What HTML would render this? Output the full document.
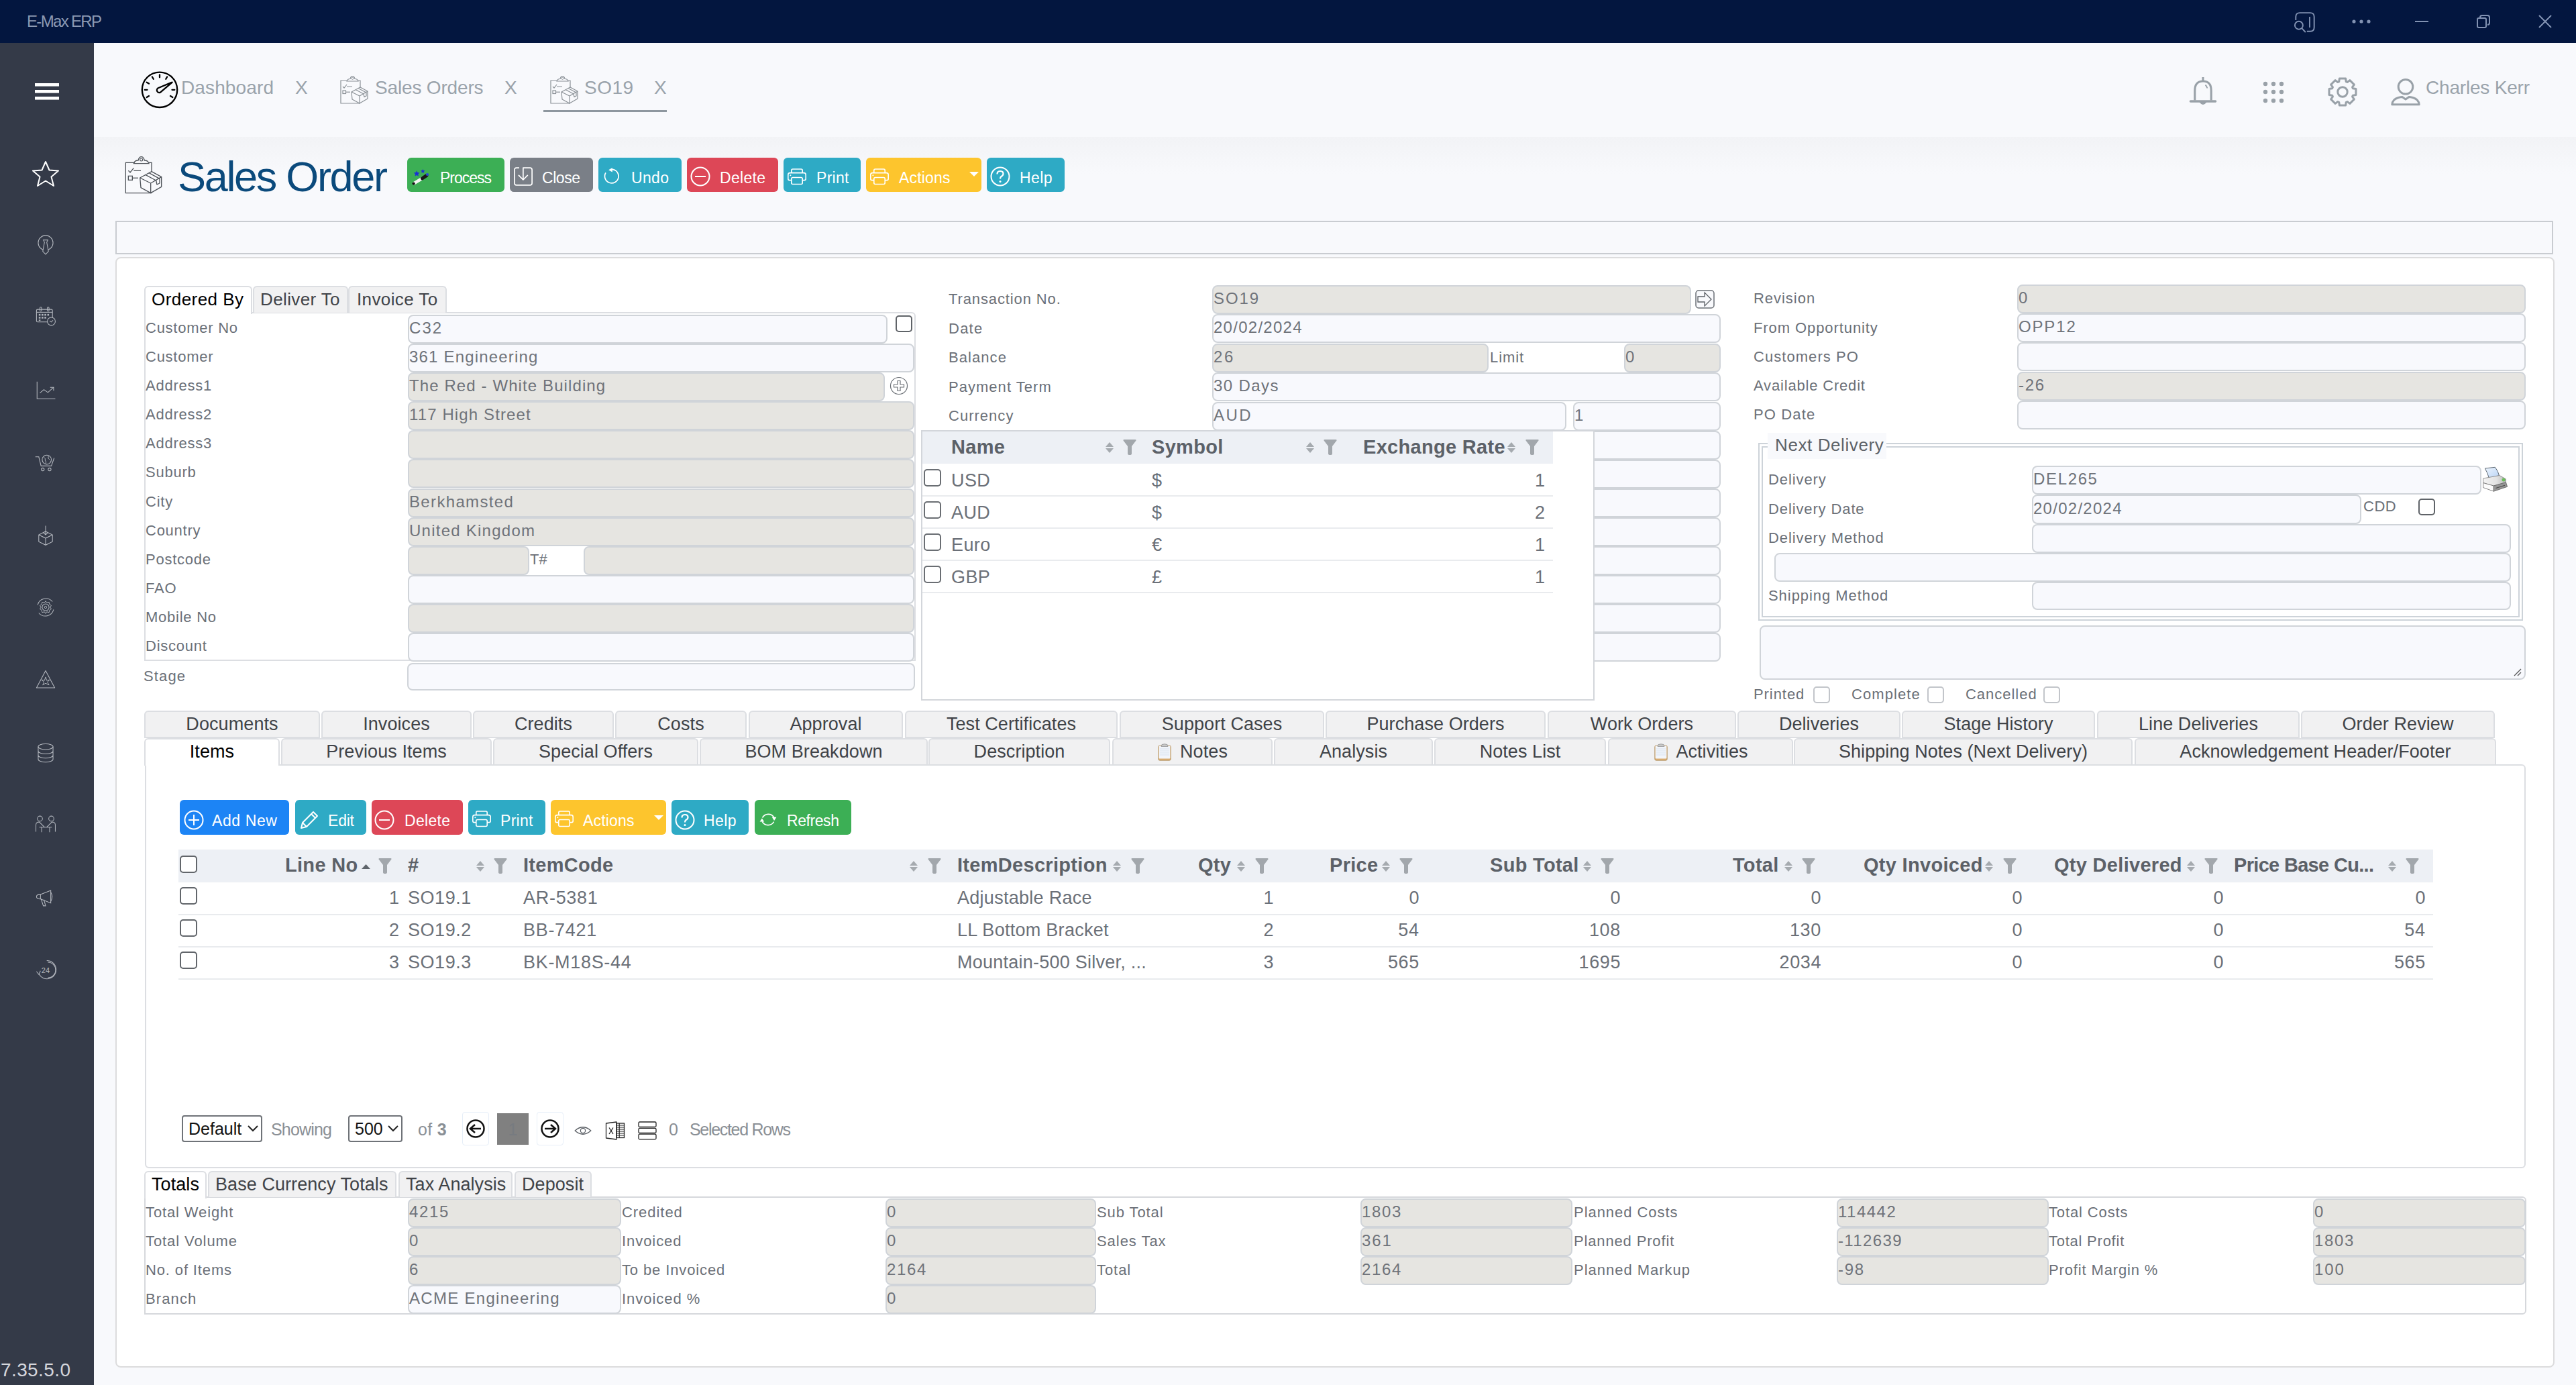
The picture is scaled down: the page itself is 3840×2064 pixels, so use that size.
<!DOCTYPE html><html><head><meta charset="utf-8"><style>
html,body{margin:0;padding:0}
body{width:3840px;height:2064px;overflow:hidden;position:relative;background:#f8f9fc;font-family:"Liberation Sans", sans-serif}
.in{position:absolute;box-sizing:border-box;border:2px solid #d0d4d9;border-radius:8px}
.tab{position:absolute;box-sizing:border-box;border:2px solid #dcdee2;border-bottom:none;border-radius:6px 6px 0 0;background:#f1f1f2;color:#3a3d42;font-size:27px;text-align:center;white-space:nowrap}
.btn{position:absolute;box-sizing:border-box;border-radius:6px;color:#fff;font-size:23px;white-space:nowrap}
svg{position:absolute;overflow:visible}
</style></head><body>
<div style="position:absolute;left:0px;top:0px;width:3840px;height:64px;background:#03163f"></div>
<div style="position:absolute;left:40px;top:18.2px;line-height:27.6px;font-size:24px;color:#8b99b3;font-weight:normal;letter-spacing:-1.674px;white-space:nowrap;">E-Max ERP</div>
<div style="position:absolute;left:0px;top:64px;width:140px;height:2000px;background:#343a48"></div>
<div style="position:absolute;left:1px;top:2025.9px;line-height:32.2px;font-size:28px;color:#d4d6dc;font-weight:normal;letter-spacing:0.395px;white-space:nowrap;">7.35.5.0</div>
<div style="position:absolute;left:140px;top:64px;width:3700px;height:140px;background:#f8f9fc"></div>
<div style="position:absolute;left:140px;top:204px;width:3700px;height:56px;background:linear-gradient(#f2f3f6,#f8f9fc)"></div>
<div style="position:absolute;left:172px;top:329px;width:3634px;height:50px;box-sizing:border-box;border:2px solid #c9ccd1;background:#f8f9fc"></div>
<div style="position:absolute;left:172px;top:383px;width:3636px;height:1655px;box-sizing:border-box;border:2px solid #dcdcdd;border-radius:8px;background:#ffffff"></div>
<svg style="left:3420px;top:17px" width="34" height="34" viewBox="0 0 34 34"><path d="M2.3 13 L2.3 8.1 Q2.3 2.1 8.3 2.1 L23.7 2.1 Q29.7 2.1 29.7 8.1 L29.7 23.7 Q29.7 29.7 23.7 29.7 L18.9 29.7" fill="none" stroke="#8292b2" stroke-width="1.9"/><line x1="23" y1="8" x2="23" y2="24" stroke="#8292b2" stroke-width="1.9"/><circle cx="6.9" cy="20.7" r="6" fill="none" stroke="#8292b2" stroke-width="1.9"/><line x1="11.3" y1="25.2" x2="16.8" y2="31" stroke="#8292b2" stroke-width="1.9"/></svg>
<svg style="left:3506px;top:29px" width="6" height="6"><circle cx="3" cy="3" r="2.6" fill="#8292b2"/></svg>
<svg style="left:3517px;top:29px" width="6" height="6"><circle cx="3" cy="3" r="2.6" fill="#8292b2"/></svg>
<svg style="left:3528px;top:29px" width="6" height="6"><circle cx="3" cy="3" r="2.6" fill="#8292b2"/></svg>
<svg style="left:3600px;top:31px" width="20" height="2"><rect width="20" height="2" fill="#8292b2"/></svg>
<svg style="left:3692px;top:22px" width="20" height="20" viewBox="0 0 20 20"><rect x="1" y="5" width="13" height="14" rx="2" fill="none" stroke="#8292b2" stroke-width="2"/><path d="M5 4 Q5 1 8 1 L16 1 Q19 1 19 4 L19 12 Q19 15 16 15" fill="none" stroke="#8292b2" stroke-width="2"/></svg>
<svg style="left:3784px;top:22px" width="20" height="20" viewBox="0 0 20 20"><path d="M1 1 L19 19 M19 1 L1 19" stroke="#8292b2" stroke-width="2"/></svg>
<svg style="left:52px;top:123.5px" width="36" height="26"><rect x="0" y="0" width="36" height="4.6" fill="#fff"/><rect x="0" y="10" width="36" height="4.6" fill="#fff"/><rect x="0" y="20" width="36" height="4.6" fill="#fff"/></svg>
<svg style="left:47px;top:239px" width="42" height="40" viewBox="0 0 42 40"><path d="M21 2 L26.5 14.5 L40 15.5 L29.5 24.5 L33 38 L21 30.5 L9 38 L12.5 24.5 L2 15.5 L15.5 14.5 Z" fill="none" stroke="#fff" stroke-width="2" stroke-linejoin="round"/></svg>
<svg style="left:51px;top:350px" width="34" height="34" viewBox="0 0 40 40"><circle cx="20" cy="14" r="13" fill="none" stroke="#b4b8bf" stroke-width="1.25"/><path d="M16 9 L24 9 L22 13 L25 29 L20 34 L15 29 L18 13 Z" fill="#343a48" stroke="#b4b8bf" stroke-width="1.25"/></svg>
<svg style="left:51px;top:456px" width="34" height="34" viewBox="0 0 40 40"><rect x="4" y="6" width="28" height="22" rx="2" fill="none" stroke="#b4b8bf" stroke-width="1.25"/><line x1="4" y1="11" x2="32" y2="11" stroke="#b4b8bf" stroke-width="1.2"/><rect x="10" y="2" width="3" height="7" rx="1.5" fill="none" stroke="#b4b8bf" stroke-width="1.2"/><rect x="23" y="2" width="3" height="7" rx="1.5" fill="none" stroke="#b4b8bf" stroke-width="1.2"/><g fill="#b4b8bf"><rect x="8" y="14" width="3" height="3"/><rect x="13" y="14" width="3" height="3"/><rect x="18" y="14" width="3" height="3"/><rect x="23" y="14" width="3" height="3"/><rect x="8" y="19" width="3" height="3"/><rect x="13" y="19" width="3" height="3"/><rect x="18" y="19" width="3" height="3"/><rect x="8" y="24" width="3" height="2"/></g><circle cx="30" cy="27" r="7" fill="#343a48" stroke="#b4b8bf" stroke-width="1.25"/><path d="M27 26 L30 28 L33 25" fill="none" stroke="#b4b8bf" stroke-width="1.2"/></svg>
<svg style="left:51px;top:567px" width="34" height="34" viewBox="0 0 40 40"><path d="M5 2 L5 32 L37 32" fill="none" stroke="#b4b8bf" stroke-width="1.25"/><path d="M10 22 L17 16 L24 21 L34 12" fill="none" stroke="#b4b8bf" stroke-width="1.25"/><path d="M28 12 L34 12 L34 18" fill="none" stroke="#b4b8bf" stroke-width="1.25"/></svg>
<svg style="left:51px;top:674px" width="34" height="34" viewBox="0 0 40 40"><path d="M2 8 L8 8 L12 24 L30 24 L35 10" fill="none" stroke="#b4b8bf" stroke-width="1.25"/><circle cx="15" cy="30" r="2.5" fill="none" stroke="#b4b8bf" stroke-width="1.2"/><circle cx="27" cy="30" r="2.5" fill="none" stroke="#b4b8bf" stroke-width="1.2"/><circle cx="22" cy="13" r="8" fill="#343a48" stroke="#b4b8bf" stroke-width="1.25"/><path d="M17 9 Q21 11 19 14 Q22 17 20 20 M25 7 Q23 11 27 13" fill="none" stroke="#b4b8bf" stroke-width="1.1"/></svg>
<svg style="left:51px;top:780px" width="34" height="34" viewBox="0 0 40 40"><path d="M20 14 L32 20 L32 32 L20 38 L8 32 L8 20 Z M8 20 L20 26 L32 20 M20 26 L20 38" fill="none" stroke="#b4b8bf" stroke-width="1.25"/><path d="M20 4 L20 20 M16 16 L20 20 L24 16" fill="none" stroke="#b4b8bf" stroke-width="1.25"/></svg>
<svg style="left:51px;top:888px" width="34" height="34" viewBox="0 0 40 40"><circle cx="20" cy="20" r="6" fill="none" stroke="#b4b8bf" stroke-width="1.2"/><circle cx="20" cy="20" r="2" fill="none" stroke="#b4b8bf" stroke-width="1"/><path d="M6 16 A15 15 0 0 1 32 10 M34 24 A15 15 0 0 1 8 30" fill="none" stroke="#b4b8bf" stroke-width="1.2"/><path d="M20 9 L22 12 L26 11 L27 15 L30 17 L28 20 L30 23 L27 25 L26 29 L22 28 L20 31 L18 28 L14 29 L13 25 L10 23 L12 20 L10 17 L13 15 L14 11 L18 12 Z" fill="none" stroke="#b4b8bf" stroke-width="1.1"/></svg>
<svg style="left:51px;top:997px" width="34" height="34" viewBox="0 0 40 40"><path d="M20 3 L36 33 L4 33 Z" fill="none" stroke="#b4b8bf" stroke-width="1.25" stroke-linejoin="round"/><path d="M20 14 L22 20 L27 19 L23 23 L26 28 L20 25 L15 28 L17 23 L13 19 L18 20 Z" fill="none" stroke="#b4b8bf" stroke-width="1.1"/></svg>
<svg style="left:51px;top:1106px" width="34" height="34" viewBox="0 0 40 40"><ellipse cx="20" cy="8" rx="13" ry="5" fill="none" stroke="#b4b8bf" stroke-width="1.25"/><path d="M7 8 L7 30 A13 5 0 0 0 33 30 L33 8 M7 15.5 A13 5 0 0 0 33 15.5 M7 23 A13 5 0 0 0 33 23" fill="none" stroke="#b4b8bf" stroke-width="1.25"/></svg>
<svg style="left:51px;top:1214px" width="34" height="34" viewBox="0 0 40 40"><circle cx="10" cy="7" r="4.5" fill="none" stroke="#b4b8bf" stroke-width="1.2"/><circle cx="30" cy="7" r="4.5" fill="none" stroke="#b4b8bf" stroke-width="1.2"/><path d="M3 30 L3 18 Q3 13 9 13 L18 22 M37 30 L37 18 Q37 13 31 13 L22 22 M9 22 L31 22 M13 22 L13 31 M27 22 L27 31" fill="none" stroke="#b4b8bf" stroke-width="1.2"/></svg>
<svg style="left:51px;top:1321px" width="34" height="34" viewBox="0 0 40 40"><path d="M11 14 L29 7 L29 29 L11 22 Z" fill="none" stroke="#b4b8bf" stroke-width="1.25"/><path d="M11 14 Q4 14 4 18 Q4 22 11 22 M29 10 Q34 18 29 26 M12 22 L16 34 L20 34 L17 23" fill="none" stroke="#b4b8bf" stroke-width="1.25"/></svg>
<svg style="left:51px;top:1429px" width="34" height="34" viewBox="0 0 40 40"><path d="M22 3 A16 16 0 1 1 8 26" fill="none" stroke="#b4b8bf" stroke-width="1.25"/><path d="M24 6 A13 13 0 0 1 24 33" fill="none" stroke="#b4b8bf" stroke-width="1.2"/><path d="M4 22 L8 27 L11 21" fill="none" stroke="#b4b8bf" stroke-width="1.2"/><text x="20" y="25" font-size="13" fill="#b4b8bf" text-anchor="middle" font-family="Liberation Sans">24</text></svg>
<svg style="left:210px;top:106px" width="56" height="56" viewBox="0 0 56 56"><circle cx="28" cy="27.8" r="26.2" fill="none" stroke="#000" stroke-width="2.4"/><g stroke="#000" stroke-width="2.3" stroke-linecap="round"><line x1="28.00" y1="9.30" x2="28.00" y2="5.50"/><line x1="37.25" y1="11.78" x2="39.15" y2="8.49"/><line x1="18.75" y1="11.78" x2="16.85" y2="8.49"/><line x1="11.98" y1="18.55" x2="8.69" y2="16.65"/><line x1="9.50" y1="27.80" x2="5.70" y2="27.80"/><line x1="11.98" y1="37.05" x2="8.69" y2="38.95"/><line x1="46.50" y1="27.80" x2="50.30" y2="27.80"/><line x1="44.02" y1="37.05" x2="47.31" y2="38.95"/></g><path d="M25.65 25.31 L46.69 16.57 L29.35 31.49 A3.6 3.6 0 0 1 25.65 25.31 Z" fill="none" stroke="#000" stroke-width="2.3" stroke-linejoin="round"/></svg>
<div style="position:absolute;left:270px;top:114.9px;line-height:32.2px;font-size:28px;color:#9aa3ab;font-weight:normal;letter-spacing:0.123px;white-space:nowrap;">Dashboard</div>
<div style="position:absolute;left:440px;top:114.9px;line-height:32.2px;font-size:28px;color:#9aa3ab;font-weight:normal;letter-spacing:0px;white-space:nowrap;">X</div>
<svg style="left:507px;top:113px" width="42" height="42" viewBox="0 0 42 42"><path d="M11 7 L1 7 L1 41 L30 41 M27 7 L30 7 L30 18" fill="none" stroke="#8a9096" stroke-width="1.2"/><path d="M10 8 Q11 4.5 15 4.5 Q16 0.5 18.5 0.5 Q21 0.5 22 4.5 Q26 4.5 27 8 Z" fill="none" stroke="#8a9096" stroke-width="1.2"/><circle cx="18.5" cy="3.8" r="1.5" fill="none" stroke="#8a9096" stroke-width="0.96"/><path d="M4 16 L6 18 L10 13 M10 16 L18 16" fill="none" stroke="#8a9096" stroke-width="1.2"/><rect x="4" y="22" width="4.5" height="4.5" fill="none" stroke="#8a9096" stroke-width="1.2"/><path d="M8.5 24.2 L15 24.2" stroke="#8a9096" stroke-width="1.2"/><path d="M17 24 L30 17 L41 23 L41 34 L29 41 L18 35 Z M17 24 L29 30 L41 23 M29 30 L29 41 M23 20.5 L35 27 M27 18.5 L39 25 L39 30 L36 31.5 L35 27" fill="#f8f9fc" stroke="#8a9096" stroke-width="1.2" stroke-linejoin="round"/></svg>
<div style="position:absolute;left:559px;top:114.9px;line-height:32.2px;font-size:28px;color:#9aa3ab;font-weight:normal;letter-spacing:-0.166px;white-space:nowrap;">Sales Orders</div>
<div style="position:absolute;left:752px;top:114.9px;line-height:32.2px;font-size:28px;color:#9aa3ab;font-weight:normal;letter-spacing:0px;white-space:nowrap;">X</div>
<svg style="left:820px;top:113px" width="42" height="42" viewBox="0 0 42 42"><path d="M11 7 L1 7 L1 41 L30 41 M27 7 L30 7 L30 18" fill="none" stroke="#8a9096" stroke-width="1.2"/><path d="M10 8 Q11 4.5 15 4.5 Q16 0.5 18.5 0.5 Q21 0.5 22 4.5 Q26 4.5 27 8 Z" fill="none" stroke="#8a9096" stroke-width="1.2"/><circle cx="18.5" cy="3.8" r="1.5" fill="none" stroke="#8a9096" stroke-width="0.96"/><path d="M4 16 L6 18 L10 13 M10 16 L18 16" fill="none" stroke="#8a9096" stroke-width="1.2"/><rect x="4" y="22" width="4.5" height="4.5" fill="none" stroke="#8a9096" stroke-width="1.2"/><path d="M8.5 24.2 L15 24.2" stroke="#8a9096" stroke-width="1.2"/><path d="M17 24 L30 17 L41 23 L41 34 L29 41 L18 35 Z M17 24 L29 30 L41 23 M29 30 L29 41 M23 20.5 L35 27 M27 18.5 L39 25 L39 30 L36 31.5 L35 27" fill="#f8f9fc" stroke="#8a9096" stroke-width="1.2" stroke-linejoin="round"/></svg>
<div style="position:absolute;left:871px;top:114.9px;line-height:32.2px;font-size:28px;color:#9aa3ab;font-weight:normal;letter-spacing:0.464px;white-space:nowrap;">SO19</div>
<div style="position:absolute;left:975px;top:114.9px;line-height:32.2px;font-size:28px;color:#9aa3ab;font-weight:normal;letter-spacing:0px;white-space:nowrap;">X</div>
<div style="position:absolute;left:810px;top:164px;width:184px;height:3px;background:#8e979f"></div>
<svg style="left:3262px;top:114px" width="44" height="46" viewBox="0 0 44 46"><path d="M22 1 L22 6.5" stroke="#99a1a8" stroke-width="3"/><path d="M9.8 35.5 L9.8 21 Q9.8 7 22 7 Q34.2 7 34.2 21 L34.2 35.5" fill="none" stroke="#99a1a8" stroke-width="3.1"/><path d="M3.5 37 L40.5 37" stroke="#99a1a8" stroke-width="3.6" stroke-linecap="round"/><path d="M17.5 38 Q22 44.5 26.5 38 Z" fill="#99a1a8" stroke="#99a1a8" stroke-width="1.5"/><path d="M25.5 12.5 Q27.5 14.5 28.5 17.5" fill="none" stroke="#99a1a8" stroke-width="1.8"/></svg>
<svg style="left:3372.5px;top:121.0px" width="8" height="8"><circle cx="4" cy="4" r="3.2" fill="#99a1a8"/></svg>
<svg style="left:3384.9px;top:121.0px" width="8" height="8"><circle cx="4" cy="4" r="3.2" fill="#99a1a8"/></svg>
<svg style="left:3397.3px;top:121.0px" width="8" height="8"><circle cx="4" cy="4" r="3.2" fill="#99a1a8"/></svg>
<svg style="left:3372.5px;top:133.4px" width="8" height="8"><circle cx="4" cy="4" r="3.2" fill="#99a1a8"/></svg>
<svg style="left:3384.9px;top:133.4px" width="8" height="8"><circle cx="4" cy="4" r="3.2" fill="#99a1a8"/></svg>
<svg style="left:3397.3px;top:133.4px" width="8" height="8"><circle cx="4" cy="4" r="3.2" fill="#99a1a8"/></svg>
<svg style="left:3372.5px;top:145.8px" width="8" height="8"><circle cx="4" cy="4" r="3.2" fill="#99a1a8"/></svg>
<svg style="left:3384.9px;top:145.8px" width="8" height="8"><circle cx="4" cy="4" r="3.2" fill="#99a1a8"/></svg>
<svg style="left:3397.3px;top:145.8px" width="8" height="8"><circle cx="4" cy="4" r="3.2" fill="#99a1a8"/></svg>
<svg style="left:3469px;top:114px" width="46" height="46" viewBox="0 0 46 46"><path d="M16.80 8.03 L17.73 7.68 L18.39 3.03 L27.61 3.03 L28.27 7.68 L29.20 8.03 L30.10 8.44 L33.86 5.62 L40.38 12.14 L37.56 15.90 L37.97 16.80 L38.32 17.73 L42.97 18.39 L42.97 27.61 L38.32 28.27 L37.97 29.20 L37.56 30.10 L40.38 33.86 L33.86 40.38 L30.10 37.56 L29.20 37.97 L28.27 38.32 L27.61 42.97 L18.39 42.97 L17.73 38.32 L16.80 37.97 L15.90 37.56 L12.14 40.38 L5.62 33.86 L8.44 30.10 L8.03 29.20 L7.68 28.27 L3.03 27.61 L3.03 18.39 L7.68 17.73 L8.03 16.80 L8.44 15.90 L5.62 12.14 L12.14 5.62 L15.90 8.44 Z" fill="none" stroke="#99a1a8" stroke-width="3" stroke-linejoin="round"/><circle cx="23" cy="23" r="7.2" fill="none" stroke="#99a1a8" stroke-width="3"/></svg>
<svg style="left:3563px;top:115px" width="46" height="44" viewBox="0 0 46 44"><circle cx="23" cy="14.3" r="10.8" fill="none" stroke="#99a1a8" stroke-width="3"/><path d="M2.8 40.8 Q3.5 33 12 30.5 Q16 29.5 18 29.5 L23 33 L28 29.5 Q30 29.5 34 30.5 Q42.5 33 43.2 40.8 Z" fill="none" stroke="#99a1a8" stroke-width="3" stroke-linejoin="round"/></svg>
<div style="position:absolute;left:3616px;top:114.9px;line-height:32.2px;font-size:28px;color:#9aa3ab;font-weight:normal;letter-spacing:-0.199px;white-space:nowrap;">Charles Kerr</div>
<svg style="left:186px;top:233px" width="56" height="56" viewBox="0 0 42 42"><path d="M11 7 L1 7 L1 41 L30 41 M27 7 L30 7 L30 18" fill="none" stroke="#4f545a" stroke-width="1.0"/><path d="M10 8 Q11 4.5 15 4.5 Q16 0.5 18.5 0.5 Q21 0.5 22 4.5 Q26 4.5 27 8 Z" fill="none" stroke="#4f545a" stroke-width="1.0"/><circle cx="18.5" cy="3.8" r="1.5" fill="none" stroke="#4f545a" stroke-width="0.8"/><path d="M4 16 L6 18 L10 13 M10 16 L18 16" fill="none" stroke="#4f545a" stroke-width="1.0"/><rect x="4" y="22" width="4.5" height="4.5" fill="none" stroke="#4f545a" stroke-width="1.0"/><path d="M8.5 24.2 L15 24.2" stroke="#4f545a" stroke-width="1.0"/><path d="M17 24 L30 17 L41 23 L41 34 L29 41 L18 35 Z M17 24 L29 30 L41 23 M29 30 L29 41 M23 20.5 L35 27 M27 18.5 L39 25 L39 30 L36 31.5 L35 27" fill="#f8f9fc" stroke="#4f545a" stroke-width="1.0" stroke-linejoin="round"/></svg>
<div style="position:absolute;left:265px;top:226.8px;line-height:72.4px;font-size:63px;color:#0b4a7c;font-weight:normal;letter-spacing:-2.311px;white-space:nowrap;">Sales Order</div>
<div class="btn" style="left:607px;top:235px;width:145px;height:51px;background:#3caf55"></div>
<div style="position:absolute;left:0;top:1px"><svg style="left:612px;top:248px" width="28" height="28" viewBox="0 0 28 28"><path d="M5.5 24 L18 16.5" stroke="#f4f4f4" stroke-width="4.6" stroke-linecap="round"/><circle cx="4.6" cy="24.6" r="2.1" fill="#111"/><path d="M17.5 16.8 L23.8 12.6" stroke="#1a1a1a" stroke-width="5" stroke-linecap="round"/><path d="M9.20 5.20 L10.43 8.10 L13.57 8.38 L11.20 10.45 L11.90 13.52 L9.20 11.90 L6.50 13.52 L7.20 10.45 L4.83 8.38 L7.97 8.10 Z" fill="#1b2fd6"/><path d="M18.30 2.90 L19.24 4.91 L21.44 5.18 L19.82 6.69 L20.24 8.87 L18.30 7.80 L16.36 8.87 L16.78 6.69 L15.16 5.18 L17.36 4.91 Z" fill="#1b2fd6"/><circle cx="25" cy="11" r="2.1" fill="#2a47d8"/></svg></div>
<div style="position:absolute;left:656px;top:252.3px;line-height:26.4px;font-size:23px;color:#fff;font-weight:normal;letter-spacing:-1.016px;white-space:nowrap;">Process</div>
<div class="btn" style="left:760px;top:235px;width:124px;height:51px;background:#7a7f87"></div>
<div style="position:absolute;left:0;top:1px"><svg style="left:766px;top:245px" width="30" height="32" viewBox="0 0 30 32"><path d="M8 4.2 L3.8 4.2 Q1 4.2 1 7 L1 27.1 Q1 29.9 3.8 29.9 L24.3 29.9 Q27.1 29.9 27.1 27.1 L27.1 7 Q27.1 4.2 24.3 4.2 L13.85 4.2 L13.85 22 M6.9 14.8 L13.85 22 L20.8 14.8" fill="none" stroke="#fff" stroke-width="1.7" stroke-linejoin="round"/></svg></div>
<div style="position:absolute;left:808px;top:252.3px;line-height:26.4px;font-size:23px;color:#fff;font-weight:normal;letter-spacing:-0.453px;white-space:nowrap;">Close</div>
<div class="btn" style="left:892px;top:235px;width:124px;height:51px;background:#2eaac5"></div>
<div style="position:absolute;left:0;top:1px"><svg style="left:895px;top:245px" width="32" height="32" viewBox="0 0 32 32"><path d="M7.9 11.45 A10.3 10.3 0 1 0 16.8 6.3" fill="none" stroke="#fff" stroke-width="1.7"/><path d="M12.2 7.3 L17.8 4 L17.8 10.6 Z" fill="#fff"/></svg></div>
<div style="position:absolute;left:941px;top:252.3px;line-height:26.4px;font-size:23px;color:#fff;font-weight:normal;letter-spacing:0.333px;white-space:nowrap;">Undo</div>
<div class="btn" style="left:1024px;top:235px;width:136px;height:51px;background:#dd4757"></div>
<div style="position:absolute;left:0;top:1px"><svg style="left:1029px;top:247px" width="30" height="30"><circle cx="15" cy="15" r="13.5" fill="none" stroke="#fff" stroke-width="2"/><line x1="7" y1="15" x2="23" y2="15" stroke="#fff" stroke-width="2"/></svg></div>
<div style="position:absolute;left:1073px;top:252.3px;line-height:26.4px;font-size:23px;color:#fff;font-weight:normal;letter-spacing:0.3px;white-space:nowrap;">Delete</div>
<div class="btn" style="left:1168px;top:235px;width:115px;height:51px;background:#2eaac5"></div>
<div style="position:absolute;left:0;top:1px"><svg style="left:1174px;top:250px" width="28" height="25" viewBox="0 0 28 25"><path d="M5.8 6.6 L5.8 3 Q5.8 1 7.8 1 L20.2 1 Q22.2 1 22.2 3 L22.2 6.6" fill="none" stroke="#fff" stroke-width="1.6"/><path d="M5.5 17.6 L3 17.6 Q0.8 17.6 0.8 15.4 L0.8 9.4 Q0.8 6.6 3.6 6.6 L24.4 6.6 Q27.2 6.6 27.2 9.4 L27.2 15.4 Q27.2 17.6 25 17.6 L22.5 17.6" fill="none" stroke="#fff" stroke-width="1.6"/><rect x="5.8" y="13.5" width="16.4" height="10" rx="2" fill="none" stroke="#fff" stroke-width="1.6"/><circle cx="4.4" cy="10.3" r="1" fill="#fff"/></svg></div>
<div style="position:absolute;left:1217px;top:252.3px;line-height:26.4px;font-size:23px;color:#fff;font-weight:normal;letter-spacing:0.301px;white-space:nowrap;">Print</div>
<div class="btn" style="left:1291px;top:235px;width:172px;height:51px;background:#fdc52d"></div>
<div style="position:absolute;left:0;top:1px"><svg style="left:1297px;top:250px" width="28" height="25" viewBox="0 0 28 25"><path d="M5.8 6.6 L5.8 3 Q5.8 1 7.8 1 L20.2 1 Q22.2 1 22.2 3 L22.2 6.6" fill="none" stroke="#fff" stroke-width="1.6"/><path d="M5.5 17.6 L3 17.6 Q0.8 17.6 0.8 15.4 L0.8 9.4 Q0.8 6.6 3.6 6.6 L24.4 6.6 Q27.2 6.6 27.2 9.4 L27.2 15.4 Q27.2 17.6 25 17.6 L22.5 17.6" fill="none" stroke="#fff" stroke-width="1.6"/><rect x="5.8" y="13.5" width="16.4" height="10" rx="2" fill="none" stroke="#fff" stroke-width="1.6"/><circle cx="4.4" cy="10.3" r="1" fill="#fff"/></svg><svg style="left:1445px;top:255px" width="14" height="8"><path d="M0 0 L14 0 L7 7 Z" fill="#fff"/></svg></div>
<div style="position:absolute;left:1340px;top:252.3px;line-height:26.4px;font-size:23px;color:#fff;font-weight:normal;letter-spacing:0.177px;white-space:nowrap;">Actions</div>
<div class="btn" style="left:1471px;top:235px;width:116px;height:51px;background:#2eaac5"></div>
<div style="position:absolute;left:0;top:1px"><svg style="left:1476px;top:247px" width="30" height="30" viewBox="0 0 30 30"><circle cx="15" cy="15" r="13.5" fill="none" stroke="#fff" stroke-width="2"/><path d="M10.5 11.5 Q10.5 7 15 7 Q19.5 7 19.5 11 Q19.5 13.5 16.5 15 Q15 16 15 18.5" fill="none" stroke="#fff" stroke-width="2.2"/><circle cx="15" cy="22.5" r="1.5" fill="#fff"/></svg></div>
<div style="position:absolute;left:1520px;top:252.3px;line-height:26.4px;font-size:23px;color:#fff;font-weight:normal;letter-spacing:0.396px;white-space:nowrap;">Help</div>
<div style="position:absolute;left:215px;top:465px;width:1150px;height:520px;box-sizing:border-box;border:2px solid #dcdee2;border-top-right-radius:6px;background:#fff"></div>
<div class="tab" style="left:215px;top:426px;width:161px;height:40px;background:#ffffff;height:42px;"></div>
<div style="position:absolute;left:226px;top:432.1px;line-height:29.9px;font-size:26px;color:#000;font-weight:normal;letter-spacing:0.443px;white-space:nowrap;">Ordered By</div>
<div class="tab" style="left:377px;top:426px;width:142px;height:40px;background:#f1f1f2;"></div>
<div style="position:absolute;left:388px;top:432.1px;line-height:29.9px;font-size:26px;color:#404348;font-weight:normal;letter-spacing:0.384px;white-space:nowrap;">Deliver To</div>
<div class="tab" style="left:519px;top:426px;width:147px;height:40px;background:#f1f1f2;"></div>
<div style="position:absolute;left:532px;top:432.1px;line-height:29.9px;font-size:26px;color:#404348;font-weight:normal;letter-spacing:0.389px;white-space:nowrap;">Invoice To</div>
<div style="position:absolute;left:217px;top:475.9px;line-height:25.3px;font-size:22px;color:#6b7078;font-weight:normal;letter-spacing:0.75px;white-space:nowrap;">Customer No</div>
<div style="position:absolute;left:217px;top:519.0px;line-height:25.3px;font-size:22px;color:#6b7078;font-weight:normal;letter-spacing:0.75px;white-space:nowrap;">Customer</div>
<div style="position:absolute;left:217px;top:562.1px;line-height:25.3px;font-size:22px;color:#6b7078;font-weight:normal;letter-spacing:0.75px;white-space:nowrap;">Address1</div>
<div style="position:absolute;left:217px;top:605.1px;line-height:25.3px;font-size:22px;color:#6b7078;font-weight:normal;letter-spacing:0.75px;white-space:nowrap;">Address2</div>
<div style="position:absolute;left:217px;top:648.2px;line-height:25.3px;font-size:22px;color:#6b7078;font-weight:normal;letter-spacing:0.75px;white-space:nowrap;">Address3</div>
<div style="position:absolute;left:217px;top:691.4px;line-height:25.3px;font-size:22px;color:#6b7078;font-weight:normal;letter-spacing:0.75px;white-space:nowrap;">Suburb</div>
<div style="position:absolute;left:217px;top:734.5px;line-height:25.3px;font-size:22px;color:#6b7078;font-weight:normal;letter-spacing:0.75px;white-space:nowrap;">City</div>
<div style="position:absolute;left:217px;top:777.6px;line-height:25.3px;font-size:22px;color:#6b7078;font-weight:normal;letter-spacing:0.75px;white-space:nowrap;">Country</div>
<div style="position:absolute;left:217px;top:820.6px;line-height:25.3px;font-size:22px;color:#6b7078;font-weight:normal;letter-spacing:0.75px;white-space:nowrap;">Postcode</div>
<div style="position:absolute;left:217px;top:863.8px;line-height:25.3px;font-size:22px;color:#6b7078;font-weight:normal;letter-spacing:0.75px;white-space:nowrap;">FAO</div>
<div style="position:absolute;left:217px;top:906.9px;line-height:25.3px;font-size:22px;color:#6b7078;font-weight:normal;letter-spacing:0.75px;white-space:nowrap;">Mobile No</div>
<div style="position:absolute;left:217px;top:950.0px;line-height:25.3px;font-size:22px;color:#6b7078;font-weight:normal;letter-spacing:0.75px;white-space:nowrap;">Discount</div>
<div class="in" style="left:608px;top:469px;width:715px;height:43px;background:#f8f9fd"></div>
<div style="position:absolute;left:610px;top:475.2px;line-height:27.6px;font-size:24px;color:#6f737a;font-weight:normal;letter-spacing:2.091px;white-space:nowrap;">C32</div>
<div style="position:absolute;left:1335px;top:470px;width:21px;height:21px;border:2px solid #5f6368;border-radius:5px;background:#fff"></div>
<div class="in" style="left:608px;top:512px;width:755px;height:43px;background:#f8f9fd"></div>
<div style="position:absolute;left:610px;top:518.2px;line-height:27.6px;font-size:24px;color:#6f737a;font-weight:normal;letter-spacing:1.186px;white-space:nowrap;">361 Engineering</div>
<div class="in" style="left:608px;top:555px;width:711px;height:43px;background:#e6e5e1"></div>
<div style="position:absolute;left:610px;top:561.2px;line-height:27.6px;font-size:24px;color:#6f737a;font-weight:normal;letter-spacing:1.102px;white-space:nowrap;">The Red - White Building</div>
<svg style="left:1326px;top:561px" width="28" height="28" viewBox="0 0 28 28"><circle cx="14" cy="14" r="12.5" fill="none" stroke="#6a6f75" stroke-width="1.2"/><path d="M12 6.5 L16 6.5 L16 12 L21.5 12 L21.5 16 L16 16 L16 21.5 L12 21.5 L12 16 L6.5 16 L6.5 12 L12 12 Z" fill="none" stroke="#6a6f75" stroke-width="1.2"/></svg>
<div class="in" style="left:608px;top:598px;width:755px;height:43px;background:#e6e5e1"></div>
<div style="position:absolute;left:610px;top:604.2px;line-height:27.6px;font-size:24px;color:#6f737a;font-weight:normal;letter-spacing:1.12px;white-space:nowrap;">117 High Street</div>
<div class="in" style="left:608px;top:641px;width:755px;height:43px;background:#e6e5e1"></div>
<div class="in" style="left:608px;top:684px;width:755px;height:43px;background:#e6e5e1"></div>
<div class="in" style="left:608px;top:728px;width:755px;height:43px;background:#e6e5e1"></div>
<div style="position:absolute;left:610px;top:734.2px;line-height:27.6px;font-size:24px;color:#6f737a;font-weight:normal;letter-spacing:1.343px;white-space:nowrap;">Berkhamsted</div>
<div class="in" style="left:608px;top:771px;width:755px;height:43px;background:#e6e5e1"></div>
<div style="position:absolute;left:610px;top:777.2px;line-height:27.6px;font-size:24px;color:#6f737a;font-weight:normal;letter-spacing:1.248px;white-space:nowrap;">United Kingdom</div>
<div class="in" style="left:608px;top:814px;width:181px;height:43px;background:#e6e5e1"></div>
<div style="position:absolute;left:790px;top:821.4px;line-height:25.3px;font-size:22px;color:#6b7078;font-weight:normal;letter-spacing:0px;white-space:nowrap;">T#</div>
<div class="in" style="left:870px;top:814px;width:493px;height:43px;background:#e6e5e1"></div>
<div class="in" style="left:608px;top:857px;width:755px;height:43px;background:#f8f9fd"></div>
<div class="in" style="left:608px;top:900px;width:755px;height:43px;background:#e6e5e1"></div>
<div class="in" style="left:608px;top:943px;width:755px;height:43px;background:#f8f9fd"></div>
<div style="position:absolute;left:214px;top:995.4px;line-height:25.3px;font-size:22px;color:#6b7078;font-weight:normal;letter-spacing:1.15px;white-space:nowrap;">Stage</div>
<div class="in" style="left:607px;top:988px;width:757px;height:41px;background:#f8f9fd"></div>
<div style="position:absolute;left:1414px;top:433.4px;line-height:25.3px;font-size:22px;color:#6b7078;font-weight:normal;letter-spacing:0.883px;white-space:nowrap;">Transaction No.</div>
<div style="position:absolute;left:1414px;top:476.8px;line-height:25.3px;font-size:22px;color:#6b7078;font-weight:normal;letter-spacing:1.239px;white-space:nowrap;">Date</div>
<div style="position:absolute;left:1414px;top:520.1px;line-height:25.3px;font-size:22px;color:#6b7078;font-weight:normal;letter-spacing:1.06px;white-space:nowrap;">Balance</div>
<div style="position:absolute;left:1414px;top:563.6px;line-height:25.3px;font-size:22px;color:#6b7078;font-weight:normal;letter-spacing:1.029px;white-space:nowrap;">Payment Term</div>
<div style="position:absolute;left:1414px;top:607.0px;line-height:25.3px;font-size:22px;color:#6b7078;font-weight:normal;letter-spacing:1.02px;white-space:nowrap;">Currency</div>
<div class="in" style="left:1807px;top:425px;width:714px;height:43px;background:#e6e5e1"></div>
<div style="position:absolute;left:1809px;top:431.2px;line-height:27.6px;font-size:24px;color:#6f737a;font-weight:normal;letter-spacing:1.944px;white-space:nowrap;">SO19</div>
<svg style="left:2527px;top:432px" width="30" height="28" viewBox="0 0 30 28"><rect x="1" y="1" width="27" height="26" rx="4" fill="#f8f9fc" stroke="#6a6f75" stroke-width="1.5"/><path d="M4 10 L14 10 L14 4 L24 14 L14 24 L14 18 L4 18 Z" fill="none" stroke="#5a5f65" stroke-width="1.3"/></svg>
<div class="in" style="left:1807px;top:468px;width:758px;height:43px;background:#f8f9fd"></div>
<div style="position:absolute;left:1809px;top:474.2px;line-height:27.6px;font-size:24px;color:#6f737a;font-weight:normal;letter-spacing:1.268px;white-space:nowrap;">20/02/2024</div>
<div class="in" style="left:1807px;top:512px;width:412px;height:43px;background:#e6e5e1"></div>
<div style="position:absolute;left:1809px;top:518.2px;line-height:27.6px;font-size:24px;color:#6f737a;font-weight:normal;letter-spacing:2.535px;white-space:nowrap;">26</div>
<div style="position:absolute;left:2221px;top:520.4px;line-height:25.3px;font-size:22px;color:#6b7078;font-weight:normal;letter-spacing:0.929px;white-space:nowrap;">Limit</div>
<div class="in" style="left:2421px;top:512px;width:144px;height:43px;background:#e6e5e1"></div>
<div style="position:absolute;left:2423px;top:518.2px;line-height:27.6px;font-size:24px;color:#6f737a;font-weight:normal;letter-spacing:1.268px;white-space:nowrap;">0</div>
<div class="in" style="left:1807px;top:555px;width:758px;height:43px;background:#f8f9fd"></div>
<div style="position:absolute;left:1809px;top:561.2px;line-height:27.6px;font-size:24px;color:#6f737a;font-weight:normal;letter-spacing:1.394px;white-space:nowrap;">30 Days</div>
<div class="in" style="left:1807px;top:599px;width:528px;height:43px;background:#f8f9fd"></div>
<div style="position:absolute;left:1809px;top:605.2px;line-height:27.6px;font-size:24px;color:#6f737a;font-weight:normal;letter-spacing:2.407px;white-space:nowrap;">AUD</div>
<div class="in" style="left:2345px;top:599px;width:220px;height:43px;background:#f8f9fd"></div>
<div style="position:absolute;left:2347px;top:605.2px;line-height:27.6px;font-size:24px;color:#6f737a;font-weight:normal;letter-spacing:1.268px;white-space:nowrap;">1</div>
<div class="in" style="left:1807px;top:642px;width:758px;height:43px;background:#f8f9fd"></div>
<div class="in" style="left:1807px;top:685px;width:758px;height:43px;background:#f8f9fd"></div>
<div class="in" style="left:1807px;top:728px;width:758px;height:43px;background:#f8f9fd"></div>
<div class="in" style="left:1807px;top:771px;width:758px;height:43px;background:#f8f9fd"></div>
<div class="in" style="left:1807px;top:814px;width:758px;height:43px;background:#f8f9fd"></div>
<div class="in" style="left:1807px;top:857px;width:758px;height:43px;background:#f8f9fd"></div>
<div class="in" style="left:1807px;top:900px;width:758px;height:43px;background:#f8f9fd"></div>
<div class="in" style="left:1807px;top:943px;width:758px;height:43px;background:#f8f9fd"></div>
<div style="position:absolute;left:1373px;top:641px;width:1004px;height:403px;box-sizing:border-box;border:2px solid #d3d6db;background:#fff"></div>
<div style="position:absolute;left:1375px;top:643px;width:940px;height:48px;background:#edf0f5"></div>
<div style="position:absolute;left:1418px;top:650.3px;line-height:33.3px;font-size:29px;color:#5c6168;font-weight:bold;letter-spacing:0.3px;white-space:nowrap;">Name</div>
<svg style="left:1648px;top:659px" width="12" height="16" viewBox="0 0 12 16"><path d="M6 0 L12 7 L0 7 Z M0 9 L12 9 L6 16 Z" fill="#a5aaaf"/></svg>
<svg style="left:1674px;top:655px" width="20" height="23" viewBox="0 0 20 23"><path d="M1.5 0 L18.5 0 Q20 0 19.5 1.5 L13 10 L13 21 Q13 23 10 23 Q7 23 7 21 L7 10 L0.5 1.5 Q0 0 1.5 0 Z" fill="#a2a7ac"/></svg>
<div style="position:absolute;left:1717px;top:650.3px;line-height:33.3px;font-size:29px;color:#5c6168;font-weight:bold;letter-spacing:0.3px;white-space:nowrap;">Symbol</div>
<svg style="left:1947px;top:659px" width="12" height="16" viewBox="0 0 12 16"><path d="M6 0 L12 7 L0 7 Z M0 9 L12 9 L6 16 Z" fill="#a5aaaf"/></svg>
<svg style="left:1973px;top:655px" width="20" height="23" viewBox="0 0 20 23"><path d="M1.5 0 L18.5 0 Q20 0 19.5 1.5 L13 10 L13 21 Q13 23 10 23 Q7 23 7 21 L7 10 L0.5 1.5 Q0 0 1.5 0 Z" fill="#a2a7ac"/></svg>
<div style="position:absolute;left:2032px;top:650.3px;line-height:33.3px;font-size:29px;color:#5c6168;font-weight:bold;letter-spacing:0.3px;white-space:nowrap;">Exchange Rate</div>
<svg style="left:2247px;top:659px" width="12" height="16" viewBox="0 0 12 16"><path d="M6 0 L12 7 L0 7 Z M0 9 L12 9 L6 16 Z" fill="#a5aaaf"/></svg>
<svg style="left:2274px;top:655px" width="20" height="23" viewBox="0 0 20 23"><path d="M1.5 0 L18.5 0 Q20 0 19.5 1.5 L13 10 L13 21 Q13 23 10 23 Q7 23 7 21 L7 10 L0.5 1.5 Q0 0 1.5 0 Z" fill="#a2a7ac"/></svg>
<div style="position:absolute;left:1375px;top:738px;width:940px;height:2px;background:#e9ebee"></div>
<div style="position:absolute;left:1377px;top:699px;width:22px;height:22px;border:2px solid #6a6e73;border-radius:5px;background:#fff"></div>
<div style="position:absolute;left:1418px;top:700.5px;line-height:31.0px;font-size:27px;color:#6b7078;font-weight:normal;letter-spacing:0.4px;white-space:nowrap;">USD</div>
<div style="position:absolute;left:1717px;top:700.5px;line-height:31.0px;font-size:27px;color:#6b7078;font-weight:normal;letter-spacing:0px;white-space:nowrap;">$</div>
<div style="position:absolute;right:1537px;top:700.5px;line-height:31.0px;font-size:27px;color:#6b7078;font-weight:normal;letter-spacing:0px;white-space:nowrap;text-align:right;">1</div>
<div style="position:absolute;left:1375px;top:786px;width:940px;height:2px;background:#e9ebee"></div>
<div style="position:absolute;left:1377px;top:747px;width:22px;height:22px;border:2px solid #6a6e73;border-radius:5px;background:#fff"></div>
<div style="position:absolute;left:1418px;top:748.5px;line-height:31.0px;font-size:27px;color:#6b7078;font-weight:normal;letter-spacing:0.4px;white-space:nowrap;">AUD</div>
<div style="position:absolute;left:1717px;top:748.5px;line-height:31.0px;font-size:27px;color:#6b7078;font-weight:normal;letter-spacing:0px;white-space:nowrap;">$</div>
<div style="position:absolute;right:1537px;top:748.5px;line-height:31.0px;font-size:27px;color:#6b7078;font-weight:normal;letter-spacing:0px;white-space:nowrap;text-align:right;">2</div>
<div style="position:absolute;left:1375px;top:834px;width:940px;height:2px;background:#e9ebee"></div>
<div style="position:absolute;left:1377px;top:795px;width:22px;height:22px;border:2px solid #6a6e73;border-radius:5px;background:#fff"></div>
<div style="position:absolute;left:1418px;top:796.5px;line-height:31.0px;font-size:27px;color:#6b7078;font-weight:normal;letter-spacing:0.4px;white-space:nowrap;">Euro</div>
<div style="position:absolute;left:1717px;top:796.5px;line-height:31.0px;font-size:27px;color:#6b7078;font-weight:normal;letter-spacing:0px;white-space:nowrap;">€</div>
<div style="position:absolute;right:1537px;top:796.5px;line-height:31.0px;font-size:27px;color:#6b7078;font-weight:normal;letter-spacing:0px;white-space:nowrap;text-align:right;">1</div>
<div style="position:absolute;left:1375px;top:882px;width:940px;height:2px;background:#e9ebee"></div>
<div style="position:absolute;left:1377px;top:843px;width:22px;height:22px;border:2px solid #6a6e73;border-radius:5px;background:#fff"></div>
<div style="position:absolute;left:1418px;top:844.5px;line-height:31.0px;font-size:27px;color:#6b7078;font-weight:normal;letter-spacing:0.4px;white-space:nowrap;">GBP</div>
<div style="position:absolute;left:1717px;top:844.5px;line-height:31.0px;font-size:27px;color:#6b7078;font-weight:normal;letter-spacing:0px;white-space:nowrap;">£</div>
<div style="position:absolute;right:1537px;top:844.5px;line-height:31.0px;font-size:27px;color:#6b7078;font-weight:normal;letter-spacing:0px;white-space:nowrap;text-align:right;">1</div>
<div style="position:absolute;left:2614px;top:432.4px;line-height:25.3px;font-size:22px;color:#6b7078;font-weight:normal;letter-spacing:0.964px;white-space:nowrap;">Revision</div>
<div style="position:absolute;left:2614px;top:475.6px;line-height:25.3px;font-size:22px;color:#6b7078;font-weight:normal;letter-spacing:0.913px;white-space:nowrap;">From Opportunity</div>
<div style="position:absolute;left:2614px;top:518.8px;line-height:25.3px;font-size:22px;color:#6b7078;font-weight:normal;letter-spacing:1.049px;white-space:nowrap;">Customers PO</div>
<div style="position:absolute;left:2614px;top:562.0px;line-height:25.3px;font-size:22px;color:#6b7078;font-weight:normal;letter-spacing:0.82px;white-space:nowrap;">Available Credit</div>
<div style="position:absolute;left:2614px;top:605.1px;line-height:25.3px;font-size:22px;color:#6b7078;font-weight:normal;letter-spacing:1.125px;white-space:nowrap;">PO Date</div>
<div class="in" style="left:3007px;top:424px;width:758px;height:43px;background:#e6e5e1"></div>
<div style="position:absolute;left:3009px;top:430.2px;line-height:27.6px;font-size:24px;color:#6f737a;font-weight:normal;letter-spacing:1.268px;white-space:nowrap;">0</div>
<div class="in" style="left:3007px;top:467px;width:758px;height:43px;background:#f8f9fd"></div>
<div style="position:absolute;left:3009px;top:473.2px;line-height:27.6px;font-size:24px;color:#6f737a;font-weight:normal;letter-spacing:1.838px;white-space:nowrap;">OPP12</div>
<div class="in" style="left:3007px;top:510px;width:758px;height:43px;background:#f8f9fd"></div>
<div class="in" style="left:3007px;top:554px;width:758px;height:43px;background:#e6e5e1"></div>
<div style="position:absolute;left:3009px;top:560.2px;line-height:27.6px;font-size:24px;color:#6f737a;font-weight:normal;letter-spacing:1.648px;white-space:nowrap;">-26</div>
<div class="in" style="left:3007px;top:597px;width:758px;height:43px;background:#f8f9fd"></div>
<div style="position:absolute;left:2621px;top:660px;width:1140px;height:265px;box-sizing:border-box;border:2px solid #cdd3d9"></div>
<div style="position:absolute;left:2626px;top:665px;width:1130px;height:255px;box-sizing:border-box;border:2px solid #cdd3d9"></div>
<div style="position:absolute;left:2635px;top:645px;width:177px;height:39px;background:#f8f9fc"></div>
<div style="position:absolute;left:2646px;top:649.0px;line-height:29.9px;font-size:26px;color:#5d6268;font-weight:normal;letter-spacing:0.6px;white-space:nowrap;">Next Delivery</div>
<div style="position:absolute;left:2636px;top:702.4px;line-height:25.3px;font-size:22px;color:#6b7078;font-weight:normal;letter-spacing:0.908px;white-space:nowrap;">Delivery</div>
<div style="position:absolute;left:2636px;top:746.4px;line-height:25.3px;font-size:22px;color:#6b7078;font-weight:normal;letter-spacing:0.88px;white-space:nowrap;">Delivery Date</div>
<div style="position:absolute;left:2636px;top:789.4px;line-height:25.3px;font-size:22px;color:#6b7078;font-weight:normal;letter-spacing:0.908px;white-space:nowrap;">Delivery Method</div>
<div style="position:absolute;left:2636px;top:875.4px;line-height:25.3px;font-size:22px;color:#6b7078;font-weight:normal;letter-spacing:0.943px;white-space:nowrap;">Shipping Method</div>
<div class="in" style="left:3029px;top:694px;width:670px;height:43px;background:#f8f9fd"></div>
<div style="position:absolute;left:3031px;top:700.2px;line-height:27.6px;font-size:24px;color:#6f737a;font-weight:normal;letter-spacing:1.648px;white-space:nowrap;">DEL265</div>
<svg style="left:3690px;top:685px" width="70" height="60" viewBox="0 0 70 60"><defs><linearGradient id="pg" x1="0" y1="0" x2="1" y2="1"><stop offset="0" stop-color="#eef5fd"/><stop offset="1" stop-color="#b9d4f6"/></linearGradient><linearGradient id="bg2" x1="0" y1="0" x2="1" y2="0"><stop offset="0" stop-color="#f4f4f4"/><stop offset="0.6" stop-color="#e2e2e2"/><stop offset="1" stop-color="#b8b8b8"/></linearGradient></defs><path d="M14.3 13 L29.4 11.3 Q34 17 35.5 23.8 L20.3 27.3 Q18 19 14.3 13 Z" fill="url(#pg)" stroke="#5a6570" stroke-width="1"/><path d="M11.7 28 L36 23.5 L45.5 29 L45.5 33.8 L27.3 39 L11.7 34.6 Z" fill="url(#bg2)" stroke="#8a8a8a" stroke-width="0.9"/><path d="M11.7 34.6 L27.3 39 L27.3 47.2 L11.7 41.6 Z" fill="#fbfbfb" stroke="#777" stroke-width="0.9"/><path d="M27.3 39 L45.5 33.8 L47.6 40.3 L27.3 47.2 Z" fill="#959595" stroke="#6a6a6a" stroke-width="0.9"/><path d="M30.5 42.5 L44 38.2" stroke="#4a4a4a" stroke-width="1.1"/><circle cx="42" cy="30" r="2.5" fill="#6dbd5c"/></svg>
<div class="in" style="left:3029px;top:737px;width:491px;height:44px;background:#f8f9fd"></div>
<div style="position:absolute;left:3031px;top:743.7px;line-height:27.6px;font-size:24px;color:#6f737a;font-weight:normal;letter-spacing:1.268px;white-space:nowrap;">20/02/2024</div>
<div style="position:absolute;left:3523px;top:742.4px;line-height:25.3px;font-size:22px;color:#6b7078;font-weight:normal;letter-spacing:0.5px;white-space:nowrap;">CDD</div>
<div style="position:absolute;left:3605px;top:743px;width:21px;height:21px;border:2px solid #5f6368;border-radius:5px;background:#fff"></div>
<div class="in" style="left:3029px;top:781px;width:714px;height:43px;background:#f8f9fd"></div>
<div class="in" style="left:2645px;top:824px;width:1098px;height:43px;background:#f8f9fd"></div>
<div class="in" style="left:3029px;top:867px;width:714px;height:42px;background:#f8f9fd"></div>
<div class="in" style="left:2623px;top:932px;width:1142px;height:81px;background:#f8f9fd;border-bottom-width:2px"></div>
<svg style="left:3747px;top:996px" width="12" height="12"><path d="M1 11 L11 1 M6 11 L11 6" stroke="#555" stroke-width="1.3"/></svg>
<div style="position:absolute;left:2614px;top:1022.4px;line-height:25.3px;font-size:22px;color:#6b7078;font-weight:normal;letter-spacing:0.929px;white-space:nowrap;">Printed</div>
<div style="position:absolute;left:2703px;top:1023px;width:21px;height:21px;border:2px solid #c2c5ca;border-radius:5px;background:#fff"></div>
<div style="position:absolute;left:2760px;top:1022.4px;line-height:25.3px;font-size:22px;color:#6b7078;font-weight:normal;letter-spacing:1.076px;white-space:nowrap;">Complete</div>
<div style="position:absolute;left:2873px;top:1023px;width:21px;height:21px;border:2px solid #c2c5ca;border-radius:5px;background:#fff"></div>
<div style="position:absolute;left:2930px;top:1022.4px;line-height:25.3px;font-size:22px;color:#6b7078;font-weight:normal;letter-spacing:0.978px;white-space:nowrap;">Cancelled</div>
<div style="position:absolute;left:3046px;top:1023px;width:21px;height:21px;border:2px solid #c2c5ca;border-radius:5px;background:#fff"></div>
<div class="tab" style="left:215px;top:1059px;width:262px;height:41px;border-bottom:2px solid #dcdee2"></div>
<div style="position:absolute;left:-154.0px;width:1000px;top:1063.5px;line-height:31.0px;font-size:27px;color:#404348;font-weight:normal;letter-spacing:0.085px;white-space:nowrap;text-align:center;">Documents</div>
<div class="tab" style="left:479px;top:1059px;width:224px;height:41px;border-bottom:2px solid #dcdee2"></div>
<div style="position:absolute;left:91.0px;width:1000px;top:1063.5px;line-height:31.0px;font-size:27px;color:#404348;font-weight:normal;letter-spacing:0.071px;white-space:nowrap;text-align:center;">Invoices</div>
<div class="tab" style="left:705px;top:1059px;width:210px;height:41px;border-bottom:2px solid #dcdee2"></div>
<div style="position:absolute;left:310.0px;width:1000px;top:1063.5px;line-height:31.0px;font-size:27px;color:#404348;font-weight:normal;letter-spacing:0.071px;white-space:nowrap;text-align:center;">Credits</div>
<div class="tab" style="left:917px;top:1059px;width:196px;height:41px;border-bottom:2px solid #dcdee2"></div>
<div style="position:absolute;left:515.0px;width:1000px;top:1063.5px;line-height:31.0px;font-size:27px;color:#404348;font-weight:normal;letter-spacing:0.086px;white-space:nowrap;text-align:center;">Costs</div>
<div class="tab" style="left:1116px;top:1059px;width:230px;height:41px;border-bottom:2px solid #dcdee2"></div>
<div style="position:absolute;left:731.0px;width:1000px;top:1063.5px;line-height:31.0px;font-size:27px;color:#404348;font-weight:normal;letter-spacing:0.076px;white-space:nowrap;text-align:center;">Approval</div>
<div class="tab" style="left:1349px;top:1059px;width:317px;height:41px;border-bottom:2px solid #dcdee2"></div>
<div style="position:absolute;left:1007.5px;width:1000px;top:1063.5px;line-height:31.0px;font-size:27px;color:#404348;font-weight:normal;letter-spacing:0.06px;white-space:nowrap;text-align:center;">Test Certificates</div>
<div class="tab" style="left:1669px;top:1059px;width:305px;height:41px;border-bottom:2px solid #dcdee2"></div>
<div style="position:absolute;left:1321.5px;width:1000px;top:1063.5px;line-height:31.0px;font-size:27px;color:#404348;font-weight:normal;letter-spacing:0.074px;white-space:nowrap;text-align:center;">Support Cases</div>
<div class="tab" style="left:1976px;top:1059px;width:328px;height:41px;border-bottom:2px solid #dcdee2"></div>
<div style="position:absolute;left:1640.0px;width:1000px;top:1063.5px;line-height:31.0px;font-size:27px;color:#404348;font-weight:normal;letter-spacing:0.073px;white-space:nowrap;text-align:center;">Purchase Orders</div>
<div class="tab" style="left:2307px;top:1059px;width:281px;height:41px;border-bottom:2px solid #dcdee2"></div>
<div style="position:absolute;left:1947.5px;width:1000px;top:1063.5px;line-height:31.0px;font-size:27px;color:#404348;font-weight:normal;letter-spacing:0.076px;white-space:nowrap;text-align:center;">Work Orders</div>
<div class="tab" style="left:2590px;top:1059px;width:243px;height:41px;border-bottom:2px solid #dcdee2"></div>
<div style="position:absolute;left:2211.5px;width:1000px;top:1063.5px;line-height:31.0px;font-size:27px;color:#404348;font-weight:normal;letter-spacing:0.066px;white-space:nowrap;text-align:center;">Deliveries</div>
<div class="tab" style="left:2835px;top:1059px;width:288px;height:41px;border-bottom:2px solid #dcdee2"></div>
<div style="position:absolute;left:2479.0px;width:1000px;top:1063.5px;line-height:31.0px;font-size:27px;color:#404348;font-weight:normal;letter-spacing:0.068px;white-space:nowrap;text-align:center;">Stage History</div>
<div class="tab" style="left:3126px;top:1059px;width:302px;height:41px;border-bottom:2px solid #dcdee2"></div>
<div style="position:absolute;left:2777.0px;width:1000px;top:1063.5px;line-height:31.0px;font-size:27px;color:#404348;font-weight:normal;letter-spacing:0.063px;white-space:nowrap;text-align:center;">Line Deliveries</div>
<div class="tab" style="left:3430px;top:1059px;width:289px;height:41px;border-bottom:2px solid #dcdee2"></div>
<div style="position:absolute;left:3074.5px;width:1000px;top:1063.5px;line-height:31.0px;font-size:27px;color:#404348;font-weight:normal;letter-spacing:0.075px;white-space:nowrap;text-align:center;">Order Review</div>
<div style="position:absolute;left:216px;top:1139px;width:3549px;height:602px;box-sizing:border-box;border:2px solid #dcdee2;border-radius:0 6px 6px 6px;background:#fff"></div>
<div class="tab" style="left:215px;top:1100px;width:202px;height:39px;background:#ffffff;height:41px;"></div>
<div style="position:absolute;left:-184.0px;width:1000px;top:1105.0px;line-height:31.0px;font-size:27px;color:#000;font-weight:normal;letter-spacing:0.082px;white-space:nowrap;text-align:center;">Items</div>
<div class="tab" style="left:419px;top:1100px;width:314px;height:39px;background:#f1f1f2;"></div>
<div style="position:absolute;left:76.0px;width:1000px;top:1105.0px;line-height:31.0px;font-size:27px;color:#404348;font-weight:normal;letter-spacing:0.069px;white-space:nowrap;text-align:center;">Previous Items</div>
<div class="tab" style="left:735px;top:1100px;width:306px;height:39px;background:#f1f1f2;"></div>
<div style="position:absolute;left:388.0px;width:1000px;top:1105.0px;line-height:31.0px;font-size:27px;color:#404348;font-weight:normal;letter-spacing:0.065px;white-space:nowrap;text-align:center;">Special Offers</div>
<div class="tab" style="left:1043px;top:1100px;width:340px;height:39px;background:#f1f1f2;"></div>
<div style="position:absolute;left:713.0px;width:1000px;top:1105.0px;line-height:31.0px;font-size:27px;color:#404348;font-weight:normal;letter-spacing:0.085px;white-space:nowrap;text-align:center;">BOM Breakdown</div>
<div class="tab" style="left:1384px;top:1100px;width:271px;height:39px;background:#f1f1f2;"></div>
<div style="position:absolute;left:1019.5px;width:1000px;top:1105.0px;line-height:31.0px;font-size:27px;color:#404348;font-weight:normal;letter-spacing:0.068px;white-space:nowrap;text-align:center;">Description</div>
<div class="tab" style="left:1658px;top:1100px;width:239px;height:39px"></div>
<div style="position:absolute;left:1294.5px;width:1000px;top:1104.5px;line-height:31.0px;font-size:27px;color:#404348;font-weight:normal;letter-spacing:0.088px;white-space:nowrap;text-align:center;">Notes</div>
<div class="tab" style="left:1899px;top:1100px;width:237px;height:39px;background:#f1f1f2;"></div>
<div style="position:absolute;left:1517.5px;width:1000px;top:1105.0px;line-height:31.0px;font-size:27px;color:#404348;font-weight:normal;letter-spacing:0.072px;white-space:nowrap;text-align:center;">Analysis</div>
<div class="tab" style="left:2138px;top:1100px;width:256px;height:39px;background:#f1f1f2;"></div>
<div style="position:absolute;left:1766.0px;width:1000px;top:1105.0px;line-height:31.0px;font-size:27px;color:#404348;font-weight:normal;letter-spacing:0.067px;white-space:nowrap;text-align:center;">Notes List</div>
<div class="tab" style="left:2397px;top:1100px;width:276px;height:39px"></div>
<div style="position:absolute;left:2052.0px;width:1000px;top:1104.5px;line-height:31.0px;font-size:27px;color:#404348;font-weight:normal;letter-spacing:0.059px;white-space:nowrap;text-align:center;">Activities</div>
<div class="tab" style="left:2674px;top:1100px;width:505px;height:39px;background:#f1f1f2;"></div>
<div style="position:absolute;left:2426.5px;width:1000px;top:1105.0px;line-height:31.0px;font-size:27px;color:#404348;font-weight:normal;letter-spacing:0.064px;white-space:nowrap;text-align:center;">Shipping Notes (Next Delivery)</div>
<div class="tab" style="left:3182px;top:1100px;width:539px;height:39px;background:#f1f1f2;"></div>
<div style="position:absolute;left:2951.5px;width:1000px;top:1105.0px;line-height:31.0px;font-size:27px;color:#404348;font-weight:normal;letter-spacing:0.072px;white-space:nowrap;text-align:center;">Acknowledgement Header/Footer</div>
<svg style="left:1726px;top:1108px" width="20" height="26" viewBox="0 0 20 26"><rect x="0.8" y="3" width="18.4" height="22.2" rx="2" fill="#dcae72" stroke="#a98a5c" stroke-width="0.8"/><rect x="1.6" y="3.5" width="16.8" height="19" rx="1" fill="#f2f5fa"/><path d="M3 8 L17 8 M3 11 L17 11 M3 14 L17 14 M3 17 L17 17" stroke="#cfdcec" stroke-width="0.7"/><path d="M5 4.5 L6 1.5 Q10 0 14 1.5 L15 4.5 Z" fill="#c9c9c9" stroke="#8d8d8d" stroke-width="0.7"/></svg>
<svg style="left:2466px;top:1108px" width="20" height="26" viewBox="0 0 20 26"><rect x="0.8" y="3" width="18.4" height="22.2" rx="2" fill="#dcae72" stroke="#a98a5c" stroke-width="0.8"/><rect x="1.6" y="3.5" width="16.8" height="19" rx="1" fill="#f2f5fa"/><path d="M3 8 L17 8 M3 11 L17 11 M3 14 L17 14 M3 17 L17 17" stroke="#cfdcec" stroke-width="0.7"/><path d="M5 4.5 L6 1.5 Q10 0 14 1.5 L15 4.5 Z" fill="#c9c9c9" stroke="#8d8d8d" stroke-width="0.7"/></svg>
<div class="btn" style="left:268px;top:1192px;width:163px;height:52px;background:#1c84f5"></div>
<div style="position:absolute;left:0;top:4px"><svg style="left:274px;top:1203px" width="30" height="30" viewBox="0 0 30 30"><circle cx="15" cy="15" r="13.5" fill="none" stroke="#fff" stroke-width="2"/><path d="M15 7 L15 23 M7 15 L23 15" stroke="#fff" stroke-width="2"/></svg></div>
<div style="position:absolute;left:316px;top:1209.8px;line-height:26.4px;font-size:23px;color:#fff;font-weight:normal;letter-spacing:0.609px;white-space:nowrap;">Add New</div>
<div class="btn" style="left:440px;top:1192px;width:106px;height:52px;background:#2eaac5"></div>
<div style="position:absolute;left:0;top:4px"><svg style="left:446px;top:1203px" width="30" height="30" viewBox="0 0 30 30"><path d="M3 27 L5 19 L21 3 L27 9 L11 25 Z M18 6 L24 12 M5 19 L11 25" fill="none" stroke="#fff" stroke-width="2" stroke-linejoin="round"/></svg></div>
<div style="position:absolute;left:489px;top:1209.8px;line-height:26.4px;font-size:23px;color:#fff;font-weight:normal;letter-spacing:-0.214px;white-space:nowrap;">Edit</div>
<div class="btn" style="left:554px;top:1192px;width:136px;height:52px;background:#dd4757"></div>
<div style="position:absolute;left:0;top:4px"><svg style="left:558px;top:1203px" width="30" height="30"><circle cx="15" cy="15" r="13.5" fill="none" stroke="#fff" stroke-width="2"/><line x1="7" y1="15" x2="23" y2="15" stroke="#fff" stroke-width="2"/></svg></div>
<div style="position:absolute;left:603px;top:1209.8px;line-height:26.4px;font-size:23px;color:#fff;font-weight:normal;letter-spacing:0.3px;white-space:nowrap;">Delete</div>
<div class="btn" style="left:698px;top:1192px;width:115px;height:52px;background:#2eaac5"></div>
<div style="position:absolute;left:0;top:4px"><svg style="left:704px;top:1204px" width="28" height="25" viewBox="0 0 28 25"><path d="M5.8 6.6 L5.8 3 Q5.8 1 7.8 1 L20.2 1 Q22.2 1 22.2 3 L22.2 6.6" fill="none" stroke="#fff" stroke-width="1.6"/><path d="M5.5 17.6 L3 17.6 Q0.8 17.6 0.8 15.4 L0.8 9.4 Q0.8 6.6 3.6 6.6 L24.4 6.6 Q27.2 6.6 27.2 9.4 L27.2 15.4 Q27.2 17.6 25 17.6 L22.5 17.6" fill="none" stroke="#fff" stroke-width="1.6"/><rect x="5.8" y="13.5" width="16.4" height="10" rx="2" fill="none" stroke="#fff" stroke-width="1.6"/><circle cx="4.4" cy="10.3" r="1" fill="#fff"/></svg></div>
<div style="position:absolute;left:746px;top:1209.8px;line-height:26.4px;font-size:23px;color:#fff;font-weight:normal;letter-spacing:0.301px;white-space:nowrap;">Print</div>
<div class="btn" style="left:821px;top:1192px;width:172px;height:52px;background:#fdc52d"></div>
<div style="position:absolute;left:0;top:4px"><svg style="left:827px;top:1204px" width="28" height="25" viewBox="0 0 28 25"><path d="M5.8 6.6 L5.8 3 Q5.8 1 7.8 1 L20.2 1 Q22.2 1 22.2 3 L22.2 6.6" fill="none" stroke="#fff" stroke-width="1.6"/><path d="M5.5 17.6 L3 17.6 Q0.8 17.6 0.8 15.4 L0.8 9.4 Q0.8 6.6 3.6 6.6 L24.4 6.6 Q27.2 6.6 27.2 9.4 L27.2 15.4 Q27.2 17.6 25 17.6 L22.5 17.6" fill="none" stroke="#fff" stroke-width="1.6"/><rect x="5.8" y="13.5" width="16.4" height="10" rx="2" fill="none" stroke="#fff" stroke-width="1.6"/><circle cx="4.4" cy="10.3" r="1" fill="#fff"/></svg><svg style="left:975px;top:1211px" width="14" height="8"><path d="M0 0 L14 0 L7 7 Z" fill="#fff"/></svg></div>
<div style="position:absolute;left:869px;top:1209.8px;line-height:26.4px;font-size:23px;color:#fff;font-weight:normal;letter-spacing:0.177px;white-space:nowrap;">Actions</div>
<div class="btn" style="left:1001px;top:1192px;width:115px;height:52px;background:#2eaac5"></div>
<div style="position:absolute;left:0;top:4px"><svg style="left:1006px;top:1203px" width="30" height="30" viewBox="0 0 30 30"><circle cx="15" cy="15" r="13.5" fill="none" stroke="#fff" stroke-width="2"/><path d="M10.5 11.5 Q10.5 7 15 7 Q19.5 7 19.5 11 Q19.5 13.5 16.5 15 Q15 16 15 18.5" fill="none" stroke="#fff" stroke-width="2.2"/><circle cx="15" cy="22.5" r="1.5" fill="#fff"/></svg></div>
<div style="position:absolute;left:1049px;top:1209.8px;line-height:26.4px;font-size:23px;color:#fff;font-weight:normal;letter-spacing:0.396px;white-space:nowrap;">Help</div>
<div class="btn" style="left:1125px;top:1192px;width:144px;height:52px;background:#3caf55"></div>
<div style="position:absolute;left:0;top:4px"><svg style="left:1131px;top:1203px" width="30" height="30" viewBox="0 0 30 30"><path d="M5.5 11.5 A10 10 0 0 1 22.8 11.2" fill="none" stroke="#fff" stroke-width="1.7"/><path d="M19.8 10.8 L26.4 10.8 L23.1 16 Z" fill="#fff"/><path d="M22.6 17.6 A10 10 0 0 1 5.2 17.4" fill="none" stroke="#fff" stroke-width="1.7"/><path d="M1.6 17.6 L8.2 17.6 L4.9 12.4 Z" fill="#fff"/></svg></div>
<div style="position:absolute;left:1173px;top:1209.8px;line-height:26.4px;font-size:23px;color:#fff;font-weight:normal;letter-spacing:-0.424px;white-space:nowrap;">Refresh</div>
<div style="position:absolute;left:266px;top:1266px;width:3361px;height:49px;background:#edf0f5"></div>
<div style="position:absolute;left:268px;top:1275px;width:22px;height:22px;border:2px solid #62666b;border-radius:5px;background:#fff"></div>
<div style="position:absolute;left:425px;top:1273.3px;line-height:33.3px;font-size:29px;color:#5c6168;font-weight:bold;letter-spacing:0.3px;white-space:nowrap;">Line No</div>
<svg style="left:539px;top:1288px" width="13" height="8"><path d="M6.5 0 L13 7 L0 7 Z" fill="#5f656b"/></svg>
<svg style="left:564px;top:1279px" width="20" height="23" viewBox="0 0 20 23"><path d="M1.5 0 L18.5 0 Q20 0 19.5 1.5 L13 10 L13 21 Q13 23 10 23 Q7 23 7 21 L7 10 L0.5 1.5 Q0 0 1.5 0 Z" fill="#a2a7ac"/></svg>
<div style="position:absolute;left:608px;top:1273.3px;line-height:33.3px;font-size:29px;color:#5c6168;font-weight:bold;letter-spacing:0.3px;white-space:nowrap;">#</div>
<svg style="left:710px;top:1283px" width="12" height="16" viewBox="0 0 12 16"><path d="M6 0 L12 7 L0 7 Z M0 9 L12 9 L6 16 Z" fill="#a5aaaf"/></svg>
<svg style="left:736px;top:1279px" width="20" height="23" viewBox="0 0 20 23"><path d="M1.5 0 L18.5 0 Q20 0 19.5 1.5 L13 10 L13 21 Q13 23 10 23 Q7 23 7 21 L7 10 L0.5 1.5 Q0 0 1.5 0 Z" fill="#a2a7ac"/></svg>
<div style="position:absolute;left:780px;top:1273.3px;line-height:33.3px;font-size:29px;color:#5c6168;font-weight:bold;letter-spacing:0.3px;white-space:nowrap;">ItemCode</div>
<svg style="left:1356px;top:1283px" width="12" height="16" viewBox="0 0 12 16"><path d="M6 0 L12 7 L0 7 Z M0 9 L12 9 L6 16 Z" fill="#a5aaaf"/></svg>
<svg style="left:1383px;top:1279px" width="20" height="23" viewBox="0 0 20 23"><path d="M1.5 0 L18.5 0 Q20 0 19.5 1.5 L13 10 L13 21 Q13 23 10 23 Q7 23 7 21 L7 10 L0.5 1.5 Q0 0 1.5 0 Z" fill="#a2a7ac"/></svg>
<div style="position:absolute;left:1427px;top:1273.3px;line-height:33.3px;font-size:29px;color:#5c6168;font-weight:bold;letter-spacing:0.3px;white-space:nowrap;">ItemDescription</div>
<svg style="left:1659px;top:1283px" width="12" height="16" viewBox="0 0 12 16"><path d="M6 0 L12 7 L0 7 Z M0 9 L12 9 L6 16 Z" fill="#a5aaaf"/></svg>
<svg style="left:1686px;top:1279px" width="20" height="23" viewBox="0 0 20 23"><path d="M1.5 0 L18.5 0 Q20 0 19.5 1.5 L13 10 L13 21 Q13 23 10 23 Q7 23 7 21 L7 10 L0.5 1.5 Q0 0 1.5 0 Z" fill="#a2a7ac"/></svg>
<div style="position:absolute;left:1786px;top:1273.3px;line-height:33.3px;font-size:29px;color:#5c6168;font-weight:bold;letter-spacing:0.3px;white-space:nowrap;">Qty</div>
<svg style="left:1844px;top:1283px" width="12" height="16" viewBox="0 0 12 16"><path d="M6 0 L12 7 L0 7 Z M0 9 L12 9 L6 16 Z" fill="#a5aaaf"/></svg>
<svg style="left:1871px;top:1279px" width="20" height="23" viewBox="0 0 20 23"><path d="M1.5 0 L18.5 0 Q20 0 19.5 1.5 L13 10 L13 21 Q13 23 10 23 Q7 23 7 21 L7 10 L0.5 1.5 Q0 0 1.5 0 Z" fill="#a2a7ac"/></svg>
<div style="position:absolute;left:1982px;top:1273.3px;line-height:33.3px;font-size:29px;color:#5c6168;font-weight:bold;letter-spacing:0.3px;white-space:nowrap;">Price</div>
<svg style="left:2060px;top:1283px" width="12" height="16" viewBox="0 0 12 16"><path d="M6 0 L12 7 L0 7 Z M0 9 L12 9 L6 16 Z" fill="#a5aaaf"/></svg>
<svg style="left:2086px;top:1279px" width="20" height="23" viewBox="0 0 20 23"><path d="M1.5 0 L18.5 0 Q20 0 19.5 1.5 L13 10 L13 21 Q13 23 10 23 Q7 23 7 21 L7 10 L0.5 1.5 Q0 0 1.5 0 Z" fill="#a2a7ac"/></svg>
<div style="position:absolute;left:2221px;top:1273.3px;line-height:33.3px;font-size:29px;color:#5c6168;font-weight:bold;letter-spacing:0.3px;white-space:nowrap;">Sub Total</div>
<svg style="left:2360px;top:1283px" width="12" height="16" viewBox="0 0 12 16"><path d="M6 0 L12 7 L0 7 Z M0 9 L12 9 L6 16 Z" fill="#a5aaaf"/></svg>
<svg style="left:2386px;top:1279px" width="20" height="23" viewBox="0 0 20 23"><path d="M1.5 0 L18.5 0 Q20 0 19.5 1.5 L13 10 L13 21 Q13 23 10 23 Q7 23 7 21 L7 10 L0.5 1.5 Q0 0 1.5 0 Z" fill="#a2a7ac"/></svg>
<div style="position:absolute;left:2583px;top:1273.3px;line-height:33.3px;font-size:29px;color:#5c6168;font-weight:bold;letter-spacing:0.3px;white-space:nowrap;">Total</div>
<svg style="left:2660px;top:1283px" width="12" height="16" viewBox="0 0 12 16"><path d="M6 0 L12 7 L0 7 Z M0 9 L12 9 L6 16 Z" fill="#a5aaaf"/></svg>
<svg style="left:2686px;top:1279px" width="20" height="23" viewBox="0 0 20 23"><path d="M1.5 0 L18.5 0 Q20 0 19.5 1.5 L13 10 L13 21 Q13 23 10 23 Q7 23 7 21 L7 10 L0.5 1.5 Q0 0 1.5 0 Z" fill="#a2a7ac"/></svg>
<div style="position:absolute;left:2778px;top:1273.3px;line-height:33.3px;font-size:29px;color:#5c6168;font-weight:bold;letter-spacing:0.3px;white-space:nowrap;">Qty Invoiced</div>
<svg style="left:2959px;top:1283px" width="12" height="16" viewBox="0 0 12 16"><path d="M6 0 L12 7 L0 7 Z M0 9 L12 9 L6 16 Z" fill="#a5aaaf"/></svg>
<svg style="left:2986px;top:1279px" width="20" height="23" viewBox="0 0 20 23"><path d="M1.5 0 L18.5 0 Q20 0 19.5 1.5 L13 10 L13 21 Q13 23 10 23 Q7 23 7 21 L7 10 L0.5 1.5 Q0 0 1.5 0 Z" fill="#a2a7ac"/></svg>
<div style="position:absolute;left:3062px;top:1273.3px;line-height:33.3px;font-size:29px;color:#5c6168;font-weight:bold;letter-spacing:0.3px;white-space:nowrap;">Qty Delivered</div>
<svg style="left:3260px;top:1283px" width="12" height="16" viewBox="0 0 12 16"><path d="M6 0 L12 7 L0 7 Z M0 9 L12 9 L6 16 Z" fill="#a5aaaf"/></svg>
<svg style="left:3286px;top:1279px" width="20" height="23" viewBox="0 0 20 23"><path d="M1.5 0 L18.5 0 Q20 0 19.5 1.5 L13 10 L13 21 Q13 23 10 23 Q7 23 7 21 L7 10 L0.5 1.5 Q0 0 1.5 0 Z" fill="#a2a7ac"/></svg>
<div style="position:absolute;left:3330px;top:1273.3px;line-height:33.3px;font-size:29px;color:#5c6168;font-weight:bold;letter-spacing:-0.681px;white-space:nowrap;">Price Base Cu...</div>
<svg style="left:3560px;top:1283px" width="12" height="16" viewBox="0 0 12 16"><path d="M6 0 L12 7 L0 7 Z M0 9 L12 9 L6 16 Z" fill="#a5aaaf"/></svg>
<svg style="left:3586px;top:1279px" width="20" height="23" viewBox="0 0 20 23"><path d="M1.5 0 L18.5 0 Q20 0 19.5 1.5 L13 10 L13 21 Q13 23 10 23 Q7 23 7 21 L7 10 L0.5 1.5 Q0 0 1.5 0 Z" fill="#a2a7ac"/></svg>
<div style="position:absolute;left:266px;top:1362px;width:3361px;height:2px;background:#e9ebee"></div>
<div style="position:absolute;left:268px;top:1322px;width:22px;height:22px;border:2px solid #62666b;border-radius:5px;background:#fff"></div>
<div style="position:absolute;right:3245px;top:1322.5px;line-height:31.0px;font-size:27px;color:#6b7078;font-weight:normal;letter-spacing:0px;white-space:nowrap;text-align:right;">1</div>
<div style="position:absolute;left:608px;top:1322.5px;line-height:31.0px;font-size:27px;color:#6b7078;font-weight:normal;letter-spacing:0.549px;white-space:nowrap;">SO19.1</div>
<div style="position:absolute;left:780px;top:1322.5px;line-height:31.0px;font-size:27px;color:#6b7078;font-weight:normal;letter-spacing:0.71px;white-space:nowrap;">AR-5381</div>
<div style="position:absolute;left:1427px;top:1322.5px;line-height:31.0px;font-size:27px;color:#6b7078;font-weight:normal;letter-spacing:0.281px;white-space:nowrap;">Adjustable Race</div>
<div style="position:absolute;right:1941px;top:1322.5px;line-height:31.0px;font-size:27px;color:#6b7078;font-weight:normal;letter-spacing:0.45px;white-space:nowrap;text-align:right;">1</div>
<div style="position:absolute;right:1724px;top:1322.5px;line-height:31.0px;font-size:27px;color:#6b7078;font-weight:normal;letter-spacing:0.45px;white-space:nowrap;text-align:right;">0</div>
<div style="position:absolute;right:1424px;top:1322.5px;line-height:31.0px;font-size:27px;color:#6b7078;font-weight:normal;letter-spacing:0.45px;white-space:nowrap;text-align:right;">0</div>
<div style="position:absolute;right:1125px;top:1322.5px;line-height:31.0px;font-size:27px;color:#6b7078;font-weight:normal;letter-spacing:0.45px;white-space:nowrap;text-align:right;">0</div>
<div style="position:absolute;right:825px;top:1322.5px;line-height:31.0px;font-size:27px;color:#6b7078;font-weight:normal;letter-spacing:0.45px;white-space:nowrap;text-align:right;">0</div>
<div style="position:absolute;right:525px;top:1322.5px;line-height:31.0px;font-size:27px;color:#6b7078;font-weight:normal;letter-spacing:0.45px;white-space:nowrap;text-align:right;">0</div>
<div style="position:absolute;right:224px;top:1322.5px;line-height:31.0px;font-size:27px;color:#6b7078;font-weight:normal;letter-spacing:0.45px;white-space:nowrap;text-align:right;">0</div>
<div style="position:absolute;left:266px;top:1410px;width:3361px;height:2px;background:#e9ebee"></div>
<div style="position:absolute;left:268px;top:1370px;width:22px;height:22px;border:2px solid #62666b;border-radius:5px;background:#fff"></div>
<div style="position:absolute;right:3245px;top:1370.5px;line-height:31.0px;font-size:27px;color:#6b7078;font-weight:normal;letter-spacing:0px;white-space:nowrap;text-align:right;">2</div>
<div style="position:absolute;left:608px;top:1370.5px;line-height:31.0px;font-size:27px;color:#6b7078;font-weight:normal;letter-spacing:0.549px;white-space:nowrap;">SO19.2</div>
<div style="position:absolute;left:780px;top:1370.5px;line-height:31.0px;font-size:27px;color:#6b7078;font-weight:normal;letter-spacing:0.701px;white-space:nowrap;">BB-7421</div>
<div style="position:absolute;left:1427px;top:1370.5px;line-height:31.0px;font-size:27px;color:#6b7078;font-weight:normal;letter-spacing:0.276px;white-space:nowrap;">LL Bottom Bracket</div>
<div style="position:absolute;right:1941px;top:1370.5px;line-height:31.0px;font-size:27px;color:#6b7078;font-weight:normal;letter-spacing:0.45px;white-space:nowrap;text-align:right;">2</div>
<div style="position:absolute;right:1724px;top:1370.5px;line-height:31.0px;font-size:27px;color:#6b7078;font-weight:normal;letter-spacing:0.901px;white-space:nowrap;text-align:right;">54</div>
<div style="position:absolute;right:1424px;top:1370.5px;line-height:31.0px;font-size:27px;color:#6b7078;font-weight:normal;letter-spacing:0.676px;white-space:nowrap;text-align:right;">108</div>
<div style="position:absolute;right:1125px;top:1370.5px;line-height:31.0px;font-size:27px;color:#6b7078;font-weight:normal;letter-spacing:0.676px;white-space:nowrap;text-align:right;">130</div>
<div style="position:absolute;right:825px;top:1370.5px;line-height:31.0px;font-size:27px;color:#6b7078;font-weight:normal;letter-spacing:0.45px;white-space:nowrap;text-align:right;">0</div>
<div style="position:absolute;right:525px;top:1370.5px;line-height:31.0px;font-size:27px;color:#6b7078;font-weight:normal;letter-spacing:0.45px;white-space:nowrap;text-align:right;">0</div>
<div style="position:absolute;right:224px;top:1370.5px;line-height:31.0px;font-size:27px;color:#6b7078;font-weight:normal;letter-spacing:0.901px;white-space:nowrap;text-align:right;">54</div>
<div style="position:absolute;left:266px;top:1458px;width:3361px;height:2px;background:#e9ebee"></div>
<div style="position:absolute;left:268px;top:1418px;width:22px;height:22px;border:2px solid #62666b;border-radius:5px;background:#fff"></div>
<div style="position:absolute;right:3245px;top:1418.5px;line-height:31.0px;font-size:27px;color:#6b7078;font-weight:normal;letter-spacing:0px;white-space:nowrap;text-align:right;">3</div>
<div style="position:absolute;left:608px;top:1418.5px;line-height:31.0px;font-size:27px;color:#6b7078;font-weight:normal;letter-spacing:0.549px;white-space:nowrap;">SO19.3</div>
<div style="position:absolute;left:780px;top:1418.5px;line-height:31.0px;font-size:27px;color:#6b7078;font-weight:normal;letter-spacing:0.687px;white-space:nowrap;">BK-M18S-44</div>
<div style="position:absolute;left:1427px;top:1418.5px;line-height:31.0px;font-size:27px;color:#6b7078;font-weight:normal;letter-spacing:0.24px;white-space:nowrap;">Mountain-500 Silver, ...</div>
<div style="position:absolute;right:1941px;top:1418.5px;line-height:31.0px;font-size:27px;color:#6b7078;font-weight:normal;letter-spacing:0.45px;white-space:nowrap;text-align:right;">3</div>
<div style="position:absolute;right:1724px;top:1418.5px;line-height:31.0px;font-size:27px;color:#6b7078;font-weight:normal;letter-spacing:0.676px;white-space:nowrap;text-align:right;">565</div>
<div style="position:absolute;right:1424px;top:1418.5px;line-height:31.0px;font-size:27px;color:#6b7078;font-weight:normal;letter-spacing:0.601px;white-space:nowrap;text-align:right;">1695</div>
<div style="position:absolute;right:1125px;top:1418.5px;line-height:31.0px;font-size:27px;color:#6b7078;font-weight:normal;letter-spacing:0.601px;white-space:nowrap;text-align:right;">2034</div>
<div style="position:absolute;right:825px;top:1418.5px;line-height:31.0px;font-size:27px;color:#6b7078;font-weight:normal;letter-spacing:0.45px;white-space:nowrap;text-align:right;">0</div>
<div style="position:absolute;right:525px;top:1418.5px;line-height:31.0px;font-size:27px;color:#6b7078;font-weight:normal;letter-spacing:0.45px;white-space:nowrap;text-align:right;">0</div>
<div style="position:absolute;right:224px;top:1418.5px;line-height:31.0px;font-size:27px;color:#6b7078;font-weight:normal;letter-spacing:0.676px;white-space:nowrap;text-align:right;">565</div>
<div style="position:absolute;box-sizing:border-box;left:271px;top:1662px;width:120px;height:40px;border:2px solid #6f7378;border-radius:4px;background:#fff"></div>
<div style="position:absolute;left:281px;top:1667.6px;line-height:28.7px;font-size:25px;color:#111;font-weight:normal;letter-spacing:0px;white-space:nowrap;">Default</div>
<svg style="left:369px;top:1677.0px" width="16" height="10"><path d="M1 1 L8 8 L15 1" fill="none" stroke="#222" stroke-width="2"/></svg>
<div style="position:absolute;left:404px;top:1668.6px;line-height:28.7px;font-size:25px;color:#8a8f95;font-weight:normal;letter-spacing:-0.815px;white-space:nowrap;">Showing</div>
<div style="position:absolute;box-sizing:border-box;left:519px;top:1662px;width:81px;height:40px;border:2px solid #6f7378;border-radius:4px;background:#fff"></div>
<div style="position:absolute;left:529px;top:1667.6px;line-height:28.7px;font-size:25px;color:#111;font-weight:normal;letter-spacing:0px;white-space:nowrap;">500</div>
<svg style="left:578px;top:1677.0px" width="16" height="10"><path d="M1 1 L8 8 L15 1" fill="none" stroke="#222" stroke-width="2"/></svg>
<div style="position:absolute;left:623px;top:1668.6px;line-height:28.7px;font-size:25px;color:#8a8f95;font-weight:normal;letter-spacing:0.3px;white-space:nowrap;">of <b>3</b></div>
<div style="position:absolute;box-sizing:border-box;left:689px;top:1657px;width:40px;height:50px;border:1px solid #e6eef8;border-radius:4px"></div>
<svg style="left:689px;top:1662px" width="40" height="40" viewBox="0 0 40 40"><circle cx="20" cy="20" r="12.5" fill="none" stroke="#111" stroke-width="2.5"/><path d="M19 14 L12 20 L19 26 M12 20 L28 20" fill="none" stroke="#111" stroke-width="2.5"/></svg>
<div style="position:absolute;left:741px;top:1659px;width:47px;height:47px;background:#808080"></div>
<div style="position:absolute;left:264.5px;width:1000px;top:1668.6px;line-height:28.7px;font-size:25px;color:#777b80;font-weight:normal;letter-spacing:0px;white-space:nowrap;text-align:center;">1</div>
<div style="position:absolute;box-sizing:border-box;left:800px;top:1657px;width:40px;height:50px;border:1px solid #e6eef8;border-radius:4px"></div>
<svg style="left:800px;top:1662px" width="40" height="40" viewBox="0 0 40 40"><circle cx="20" cy="20" r="12.5" fill="none" stroke="#111" stroke-width="2.5"/><path d="M21 14 L28 20 L21 26 M12 20 L28 20" fill="none" stroke="#111" stroke-width="2.5"/></svg>
<svg style="left:856px;top:1677px" width="26" height="16" viewBox="0 0 26 16"><path d="M1.2 8 Q13 -2.5 24.8 8 Q13 18.5 1.2 8 Z" fill="none" stroke="#555a60" stroke-width="1.2"/><circle cx="13" cy="8" r="3.6" fill="none" stroke="#555a60" stroke-width="1.2"/></svg>
<svg style="left:902px;top:1671px" width="30" height="28" viewBox="0 0 30 28"><path d="M1.5 3 L17 1 L17 27 L1.5 25 Z" fill="#fff" stroke="#222" stroke-width="1.3" stroke-linejoin="round"/><path d="M6 9.5 L12 19 M12 9.5 L6 19" stroke="#222" stroke-width="1.3"/><rect x="17" y="3" width="11.5" height="21.5" fill="none" stroke="#222" stroke-width="1.3"/><path d="M21.2 3 L21.2 24.5 M17 6 L28.5 6 M17 9 L28.5 9 M17 12 L28.5 12 M17 15 L28.5 15 M17 18 L28.5 18 M17 21 L28.5 21" stroke="#222" stroke-width="1.1"/></svg>
<svg style="left:951px;top:1671px" width="28" height="28" viewBox="0 0 28 28"><rect x="1" y="1" width="26" height="7.5" rx="1.5" fill="none" stroke="#222" stroke-width="1.3"/><rect x="1" y="10.4" width="26" height="7.1" rx="1.5" fill="none" stroke="#222" stroke-width="1.3"/><rect x="1" y="19.2" width="26" height="7.6" rx="1.5" fill="none" stroke="#222" stroke-width="1.3"/></svg>
<div style="position:absolute;left:997px;top:1668.6px;line-height:28.7px;font-size:25px;color:#8a8f95;font-weight:normal;letter-spacing:0px;white-space:nowrap;">0</div>
<div style="position:absolute;left:1028px;top:1668.6px;line-height:28.7px;font-size:25px;color:#8a8f95;font-weight:normal;letter-spacing:-1.312px;white-space:nowrap;">Selected Rows</div>
<div style="position:absolute;left:215px;top:1783px;width:3551px;height:176px;box-sizing:border-box;border:2px solid #d6d8dc;border-radius:0 6px 6px 0;background:#fff"></div>
<div class="tab" style="left:215px;top:1745px;width:93px;height:39px;background:#ffffff;height:41px;"></div>
<div style="position:absolute;left:226px;top:1750.0px;line-height:31.0px;font-size:27px;color:#000;font-weight:normal;letter-spacing:0.071px;white-space:nowrap;">Totals</div>
<div class="tab" style="left:310px;top:1745px;width:281px;height:39px;background:#f1f1f2;"></div>
<div style="position:absolute;left:321px;top:1750.0px;line-height:31.0px;font-size:27px;color:#404348;font-weight:normal;letter-spacing:0.067px;white-space:nowrap;">Base Currency Totals</div>
<div class="tab" style="left:594px;top:1745px;width:170px;height:39px;background:#f1f1f2;"></div>
<div style="position:absolute;left:605px;top:1750.0px;line-height:31.0px;font-size:27px;color:#404348;font-weight:normal;letter-spacing:0.068px;white-space:nowrap;">Tax Analysis</div>
<div class="tab" style="left:767px;top:1745px;width:115px;height:39px;background:#f1f1f2;"></div>
<div style="position:absolute;left:778px;top:1750.0px;line-height:31.0px;font-size:27px;color:#404348;font-weight:normal;letter-spacing:0.076px;white-space:nowrap;">Deposit</div>
<div style="position:absolute;left:217px;top:1794.3px;line-height:25.3px;font-size:22px;color:#6b7078;font-weight:normal;letter-spacing:0.878px;white-space:nowrap;">Total Weight</div>
<div class="in" style="left:608px;top:1786px;width:318px;height:43px;background:#e6e5e1"></div>
<div style="position:absolute;left:610px;top:1792.2px;line-height:27.6px;font-size:24px;color:#6f737a;font-weight:normal;letter-spacing:1.69px;white-space:nowrap;">4215</div>
<div style="position:absolute;left:217px;top:1837.3px;line-height:25.3px;font-size:22px;color:#6b7078;font-weight:normal;letter-spacing:0.916px;white-space:nowrap;">Total Volume</div>
<div class="in" style="left:608px;top:1829px;width:318px;height:43px;background:#e6e5e1"></div>
<div style="position:absolute;left:610px;top:1835.2px;line-height:27.6px;font-size:24px;color:#6f737a;font-weight:normal;letter-spacing:1.268px;white-space:nowrap;">0</div>
<div style="position:absolute;left:217px;top:1880.3px;line-height:25.3px;font-size:22px;color:#6b7078;font-weight:normal;letter-spacing:0.862px;white-space:nowrap;">No. of Items</div>
<div class="in" style="left:608px;top:1872px;width:318px;height:43px;background:#e6e5e1"></div>
<div style="position:absolute;left:610px;top:1878.2px;line-height:27.6px;font-size:24px;color:#6f737a;font-weight:normal;letter-spacing:1.268px;white-space:nowrap;">6</div>
<div style="position:absolute;left:217px;top:1923.3px;line-height:25.3px;font-size:22px;color:#6b7078;font-weight:normal;letter-spacing:1.115px;white-space:nowrap;">Branch</div>
<div class="in" style="left:608px;top:1915px;width:318px;height:43px;background:#f8f9fd"></div>
<div style="position:absolute;left:610px;top:1921.2px;line-height:27.6px;font-size:24px;color:#6f737a;font-weight:normal;letter-spacing:1.293px;white-space:nowrap;">ACME Engineering</div>
<div style="position:absolute;left:927px;top:1794.3px;line-height:25.3px;font-size:22px;color:#6b7078;font-weight:normal;letter-spacing:0.95px;white-space:nowrap;">Credited</div>
<div class="in" style="left:1320px;top:1786px;width:314px;height:43px;background:#e6e5e1"></div>
<div style="position:absolute;left:1322px;top:1792.2px;line-height:27.6px;font-size:24px;color:#6f737a;font-weight:normal;letter-spacing:1.268px;white-space:nowrap;">0</div>
<div style="position:absolute;left:927px;top:1837.3px;line-height:25.3px;font-size:22px;color:#6b7078;font-weight:normal;letter-spacing:0.936px;white-space:nowrap;">Invoiced</div>
<div class="in" style="left:1320px;top:1829px;width:314px;height:43px;background:#e6e5e1"></div>
<div style="position:absolute;left:1322px;top:1835.2px;line-height:27.6px;font-size:24px;color:#6f737a;font-weight:normal;letter-spacing:1.268px;white-space:nowrap;">0</div>
<div style="position:absolute;left:927px;top:1880.3px;line-height:25.3px;font-size:22px;color:#6b7078;font-weight:normal;letter-spacing:0.873px;white-space:nowrap;">To be Invoiced</div>
<div class="in" style="left:1320px;top:1872px;width:314px;height:43px;background:#e6e5e1"></div>
<div style="position:absolute;left:1322px;top:1878.2px;line-height:27.6px;font-size:24px;color:#6f737a;font-weight:normal;letter-spacing:1.69px;white-space:nowrap;">2164</div>
<div style="position:absolute;left:927px;top:1923.3px;line-height:25.3px;font-size:22px;color:#6b7078;font-weight:normal;letter-spacing:0.957px;white-space:nowrap;">Invoiced %</div>
<div class="in" style="left:1320px;top:1915px;width:314px;height:43px;background:#e6e5e1"></div>
<div style="position:absolute;left:1322px;top:1921.2px;line-height:27.6px;font-size:24px;color:#6f737a;font-weight:normal;letter-spacing:1.268px;white-space:nowrap;">0</div>
<div style="position:absolute;left:1635px;top:1794.3px;line-height:25.3px;font-size:22px;color:#6b7078;font-weight:normal;letter-spacing:0.913px;white-space:nowrap;">Sub Total</div>
<div class="in" style="left:2028px;top:1786px;width:316px;height:43px;background:#e6e5e1"></div>
<div style="position:absolute;left:2030px;top:1792.2px;line-height:27.6px;font-size:24px;color:#6f737a;font-weight:normal;letter-spacing:1.69px;white-space:nowrap;">1803</div>
<div style="position:absolute;left:1635px;top:1837.3px;line-height:25.3px;font-size:22px;color:#6b7078;font-weight:normal;letter-spacing:0.95px;white-space:nowrap;">Sales Tax</div>
<div class="in" style="left:2028px;top:1829px;width:316px;height:43px;background:#e6e5e1"></div>
<div style="position:absolute;left:2030px;top:1835.2px;line-height:27.6px;font-size:24px;color:#6f737a;font-weight:normal;letter-spacing:1.901px;white-space:nowrap;">361</div>
<div style="position:absolute;left:1635px;top:1880.3px;line-height:25.3px;font-size:22px;color:#6b7078;font-weight:normal;letter-spacing:0.929px;white-space:nowrap;">Total</div>
<div class="in" style="left:2028px;top:1872px;width:316px;height:43px;background:#e6e5e1"></div>
<div style="position:absolute;left:2030px;top:1878.2px;line-height:27.6px;font-size:24px;color:#6f737a;font-weight:normal;letter-spacing:1.69px;white-space:nowrap;">2164</div>
<div style="position:absolute;left:2346px;top:1794.3px;line-height:25.3px;font-size:22px;color:#6b7078;font-weight:normal;letter-spacing:0.954px;white-space:nowrap;">Planned Costs</div>
<div class="in" style="left:2738px;top:1786px;width:316px;height:43px;background:#e6e5e1"></div>
<div style="position:absolute;left:2740px;top:1792.2px;line-height:27.6px;font-size:24px;color:#6f737a;font-weight:normal;letter-spacing:1.487px;white-space:nowrap;">114442</div>
<div style="position:absolute;left:2346px;top:1837.3px;line-height:25.3px;font-size:22px;color:#6b7078;font-weight:normal;letter-spacing:0.85px;white-space:nowrap;">Planned Profit</div>
<div class="in" style="left:2738px;top:1829px;width:316px;height:43px;background:#e6e5e1"></div>
<div style="position:absolute;left:2740px;top:1835.2px;line-height:27.6px;font-size:24px;color:#6f737a;font-weight:normal;letter-spacing:1.366px;white-space:nowrap;">-112639</div>
<div style="position:absolute;left:2346px;top:1880.3px;line-height:25.3px;font-size:22px;color:#6b7078;font-weight:normal;letter-spacing:0.986px;white-space:nowrap;">Planned Markup</div>
<div class="in" style="left:2738px;top:1872px;width:316px;height:43px;background:#e6e5e1"></div>
<div style="position:absolute;left:2740px;top:1878.2px;line-height:27.6px;font-size:24px;color:#6f737a;font-weight:normal;letter-spacing:1.648px;white-space:nowrap;">-98</div>
<div style="position:absolute;left:3054px;top:1794.3px;line-height:25.3px;font-size:22px;color:#6b7078;font-weight:normal;letter-spacing:0.871px;white-space:nowrap;">Total Costs</div>
<div class="in" style="left:3448px;top:1786px;width:317px;height:43px;background:#e6e5e1"></div>
<div style="position:absolute;left:3450px;top:1792.2px;line-height:27.6px;font-size:24px;color:#6f737a;font-weight:normal;letter-spacing:1.268px;white-space:nowrap;">0</div>
<div style="position:absolute;left:3054px;top:1837.3px;line-height:25.3px;font-size:22px;color:#6b7078;font-weight:normal;letter-spacing:0.756px;white-space:nowrap;">Total Profit</div>
<div class="in" style="left:3448px;top:1829px;width:317px;height:43px;background:#e6e5e1"></div>
<div style="position:absolute;left:3450px;top:1835.2px;line-height:27.6px;font-size:24px;color:#6f737a;font-weight:normal;letter-spacing:1.69px;white-space:nowrap;">1803</div>
<div style="position:absolute;left:3054px;top:1880.3px;line-height:25.3px;font-size:22px;color:#6b7078;font-weight:normal;letter-spacing:0.859px;white-space:nowrap;">Profit Margin %</div>
<div class="in" style="left:3448px;top:1872px;width:317px;height:43px;background:#e6e5e1"></div>
<div style="position:absolute;left:3450px;top:1878.2px;line-height:27.6px;font-size:24px;color:#6f737a;font-weight:normal;letter-spacing:1.901px;white-space:nowrap;">100</div>
</body></html>
